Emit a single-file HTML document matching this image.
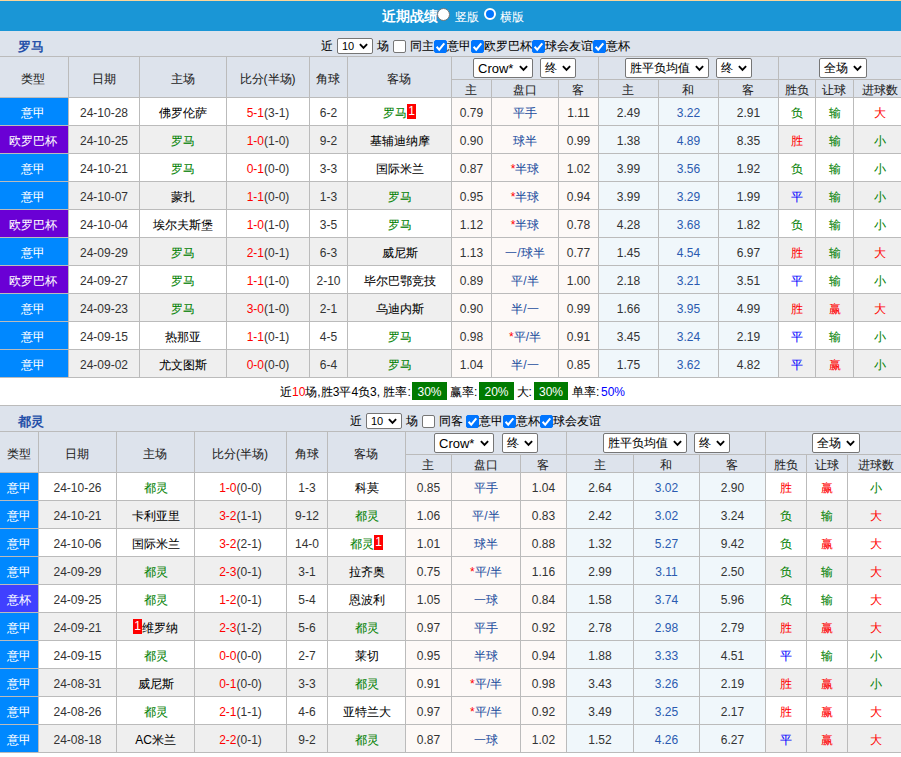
<!DOCTYPE html>
<html><head><meta charset="utf-8"><style>
html,body{margin:0;padding:0;}
body{width:901px;height:757px;overflow:hidden;position:relative;background:#fff;font-family:"Liberation Sans",sans-serif;font-size:12px;}
div,p{position:absolute;margin:0;padding:0;box-sizing:border-box;}
p{text-align:center;white-space:nowrap;}
.sel{height:20px;border:1px solid #767676;border-radius:2px;background:#fff;font-size:13px;line-height:19px;}
.sel.small{height:16px;line-height:14px;font-size:11px;border-radius:2px;}
.sel.small .chev{right:4px;}
.sel .st{position:absolute;left:4px;top:0;color:#000;}
.sel .chev{position:absolute;right:4.5px;top:6px;}
.sel.small .chev{top:4px;}
.cb{width:13px;height:13px;border:1px solid #767676;border-radius:2px;background:#fff;}
.cb.on{background:#0075ff;border-color:#0075ff;}
.cb svg{position:absolute;left:-1px;top:-1px;}
.radio{width:13px;height:13px;border-radius:50%;background:#fff;border:1px solid #767676;}
.radio.on{background:#0075ff;border:2px solid #fff;}
i{font-style:normal;-webkit-text-stroke:0.06px currentColor;}
p[style*="bold"] i{-webkit-text-stroke:0;}
.rc{display:inline-block;background:#ff0000;color:#fff;font-weight:normal;width:9px;height:15px;line-height:15px;text-align:center;vertical-align:2px;}
.gb{display:inline-block;background:#007a00;color:#fff;font-weight:normal;height:18px;line-height:18px;text-align:center;font-size:13px;vertical-align:middle;}
</style></head><body>
<div style="left:0px;top:0px;width:901px;height:1px;background:#fdd598;"></div>
<div style="left:0px;top:1px;width:901px;height:30px;background:#1a96d6;"></div>
<p style="left:369.5px;top:1px;width:80px;height:30px;line-height:30px;color:#fff;font-size:14px;font-weight:bold;"><i>近期战绩</i></p>
<div class="radio" style="left:437px;top:8px;"></div>
<p style="left:437.0px;top:2px;width:60px;height:30px;line-height:30px;color:#fff;font-size:12px;"><i>竖版</i></p>
<div class="radio on" style="left:484px;top:8px;width:12px;height:12px;"></div>
<p style="left:482.0px;top:2px;width:60px;height:30px;line-height:30px;color:#fff;font-size:12px;"><i>横版</i></p>
<div style="left:0px;top:31px;width:901px;height:25px;background:#dde3ec;"></div>
<p style="left:0.5px;top:34px;width:60px;height:25px;line-height:25px;color:#2550a8;font-size:13px;font-weight:bold;"><i>罗马</i></p>
<p style="left:321px;top:34px;height:25px;line-height:25px;font-size:12px;color:#000;white-space:nowrap;"><i>近</i></p>
<div class="sel small" style="left:337px;top:38px;width:36px;"><span class="st">10</span><svg class="chev" width="9" height="7" viewBox="0 0 9 7"><path d="M0.9 1.2 L4.5 4.9 L8.1 1.2" fill="none" stroke="#000" stroke-width="1.9"/></svg></div>
<p style="left:377px;top:34px;height:25px;line-height:25px;font-size:12px;color:#000;white-space:nowrap;"><i>场</i></p>
<div class="cb" style="left:393px;top:40px;"></div>
<p style="left:410px;top:34px;height:25px;line-height:25px;font-size:12px;color:#000;white-space:nowrap;"><i>同主</i></p>
<div class="cb on" style="left:434px;top:40px;"><svg width="13" height="13" viewBox="0 0 13 13"><path d="M2.6 6.8 L5.2 9.6 L10.3 3.3" fill="none" stroke="#fff" stroke-width="2"/></svg></div>
<p style="left:447px;top:34px;height:25px;line-height:25px;font-size:12px;color:#000;white-space:nowrap;"><i>意甲</i></p>
<div class="cb on" style="left:471px;top:40px;"><svg width="13" height="13" viewBox="0 0 13 13"><path d="M2.6 6.8 L5.2 9.6 L10.3 3.3" fill="none" stroke="#fff" stroke-width="2"/></svg></div>
<p style="left:484px;top:34px;height:25px;line-height:25px;font-size:12px;color:#000;white-space:nowrap;"><i>欧罗巴杯</i></p>
<div class="cb on" style="left:532px;top:40px;"><svg width="13" height="13" viewBox="0 0 13 13"><path d="M2.6 6.8 L5.2 9.6 L10.3 3.3" fill="none" stroke="#fff" stroke-width="2"/></svg></div>
<p style="left:545px;top:34px;height:25px;line-height:25px;font-size:12px;color:#000;white-space:nowrap;"><i>球会友谊</i></p>
<div class="cb on" style="left:593px;top:40px;"><svg width="13" height="13" viewBox="0 0 13 13"><path d="M2.6 6.8 L5.2 9.6 L10.3 3.3" fill="none" stroke="#fff" stroke-width="2"/></svg></div>
<p style="left:606px;top:34px;height:25px;line-height:25px;font-size:12px;color:#000;white-space:nowrap;"><i>意杯</i></p>
<div style="left:0px;top:56px;width:901px;height:1px;background:#bbbbbb;"></div>
<div style="left:0px;top:57px;width:901px;height:40px;background:#dde3ec;"></div>
<div style="left:451px;top:79px;width:450px;height:1px;background:#bbbbbb;"></div>
<div style="left:0px;top:97px;width:901px;height:1px;background:#bbbbbb;"></div>
<div style="left:68px;top:56px;width:1px;height:41px;background:#bbbbbb;"></div>
<div style="left:139px;top:56px;width:1px;height:41px;background:#bbbbbb;"></div>
<div style="left:226px;top:56px;width:1px;height:41px;background:#bbbbbb;"></div>
<div style="left:309px;top:56px;width:1px;height:41px;background:#bbbbbb;"></div>
<div style="left:347px;top:56px;width:1px;height:41px;background:#bbbbbb;"></div>
<div style="left:451px;top:56px;width:1px;height:41px;background:#bbbbbb;"></div>
<div style="left:598px;top:56px;width:1px;height:41px;background:#bbbbbb;"></div>
<div style="left:778px;top:56px;width:1px;height:41px;background:#bbbbbb;"></div>
<div style="left:491px;top:79px;width:1px;height:18px;background:#bbbbbb;"></div>
<div style="left:558px;top:79px;width:1px;height:18px;background:#bbbbbb;"></div>
<div style="left:658px;top:79px;width:1px;height:18px;background:#bbbbbb;"></div>
<div style="left:718px;top:79px;width:1px;height:18px;background:#bbbbbb;"></div>
<div style="left:815px;top:79px;width:1px;height:18px;background:#bbbbbb;"></div>
<div style="left:853px;top:79px;width:1px;height:18px;background:#bbbbbb;"></div>
<p style="left:-67.5px;top:59px;width:200px;height:40px;line-height:40px;color:#222;font-size:12px;"><i>类型</i></p>
<p style="left:3.5px;top:59px;width:200px;height:40px;line-height:40px;color:#222;font-size:12px;"><i>日期</i></p>
<p style="left:82.5px;top:59px;width:200px;height:40px;line-height:40px;color:#222;font-size:12px;"><i>主场</i></p>
<p style="left:167.5px;top:59px;width:200px;height:40px;line-height:40px;color:#222;font-size:12px;"><i>比分</i>(<i>半场</i>)</p>
<p style="left:228.0px;top:59px;width:200px;height:40px;line-height:40px;color:#222;font-size:12px;"><i>角球</i></p>
<p style="left:299.0px;top:59px;width:200px;height:40px;line-height:40px;color:#222;font-size:12px;"><i>客场</i></p>
<p style="left:371.0px;top:82px;width:200px;height:17px;line-height:17px;color:#222;font-size:12px;"><i>主</i></p>
<p style="left:424.5px;top:82px;width:200px;height:17px;line-height:17px;color:#222;font-size:12px;"><i>盘口</i></p>
<p style="left:478.0px;top:82px;width:200px;height:17px;line-height:17px;color:#222;font-size:12px;"><i>客</i></p>
<p style="left:528.0px;top:82px;width:200px;height:17px;line-height:17px;color:#222;font-size:12px;"><i>主</i></p>
<p style="left:588.0px;top:82px;width:200px;height:17px;line-height:17px;color:#222;font-size:12px;"><i>和</i></p>
<p style="left:648.0px;top:82px;width:200px;height:17px;line-height:17px;color:#222;font-size:12px;"><i>客</i></p>
<p style="left:696.5px;top:82px;width:200px;height:17px;line-height:17px;color:#222;font-size:12px;"><i>胜负</i></p>
<p style="left:734.0px;top:82px;width:200px;height:17px;line-height:17px;color:#222;font-size:12px;"><i>让球</i></p>
<p style="left:779.5px;top:82px;width:200px;height:17px;line-height:17px;color:#222;font-size:12px;"><i>进球数</i></p>
<div class="sel" style="left:473px;top:58px;width:60px;font-size:13px;"><span class="st">Crow*</span><svg class="chev" width="9" height="7" viewBox="0 0 9 7"><path d="M0.9 1.2 L4.5 4.9 L8.1 1.2" fill="none" stroke="#000" stroke-width="1.9"/></svg></div>
<div class="sel" style="left:540px;top:58px;width:36px;font-size:12px;"><span class="st"><i>终</i></span><svg class="chev" width="9" height="7" viewBox="0 0 9 7"><path d="M0.9 1.2 L4.5 4.9 L8.1 1.2" fill="none" stroke="#000" stroke-width="1.9"/></svg></div>
<div class="sel" style="left:625px;top:58px;width:84px;font-size:12px;"><span class="st"><i>胜平负均值</i></span><svg class="chev" width="9" height="7" viewBox="0 0 9 7"><path d="M0.9 1.2 L4.5 4.9 L8.1 1.2" fill="none" stroke="#000" stroke-width="1.9"/></svg></div>
<div class="sel" style="left:716px;top:58px;width:36px;font-size:12px;"><span class="st"><i>终</i></span><svg class="chev" width="9" height="7" viewBox="0 0 9 7"><path d="M0.9 1.2 L4.5 4.9 L8.1 1.2" fill="none" stroke="#000" stroke-width="1.9"/></svg></div>
<div class="sel" style="left:819px;top:58px;width:48px;font-size:12px;"><span class="st"><i>全场</i></span><svg class="chev" width="9" height="7" viewBox="0 0 9 7"><path d="M0.9 1.2 L4.5 4.9 L8.1 1.2" fill="none" stroke="#000" stroke-width="1.9"/></svg></div>
<div style="left:0px;top:98px;width:68px;height:27px;background:#0088ff;"></div>
<div style="left:69px;top:98px;width:70px;height:27px;background:#ffffff;"></div>
<div style="left:140px;top:98px;width:86px;height:27px;background:#ffffff;"></div>
<div style="left:227px;top:98px;width:82px;height:27px;background:#ffffff;"></div>
<div style="left:310px;top:98px;width:37px;height:27px;background:#ffffff;"></div>
<div style="left:348px;top:98px;width:103px;height:27px;background:#ffffff;"></div>
<div style="left:452px;top:98px;width:39px;height:27px;background:#fdf9f7;"></div>
<div style="left:492px;top:98px;width:66px;height:27px;background:#fdf9f7;"></div>
<div style="left:559px;top:98px;width:39px;height:27px;background:#fdf9f7;"></div>
<div style="left:599px;top:98px;width:59px;height:27px;background:#f0f7fb;"></div>
<div style="left:659px;top:98px;width:59px;height:27px;background:#f0f7fb;"></div>
<div style="left:719px;top:98px;width:59px;height:27px;background:#f0f7fb;"></div>
<div style="left:779px;top:98px;width:36px;height:27px;background:#ffffff;"></div>
<div style="left:816px;top:98px;width:37px;height:27px;background:#ffffff;"></div>
<div style="left:854px;top:98px;width:52px;height:27px;background:#ffffff;"></div>
<div style="left:68px;top:98px;width:1px;height:27px;background:#bbbbbb;"></div>
<div style="left:139px;top:98px;width:1px;height:27px;background:#bbbbbb;"></div>
<div style="left:226px;top:98px;width:1px;height:27px;background:#bbbbbb;"></div>
<div style="left:309px;top:98px;width:1px;height:27px;background:#bbbbbb;"></div>
<div style="left:347px;top:98px;width:1px;height:27px;background:#bbbbbb;"></div>
<div style="left:451px;top:98px;width:1px;height:27px;background:#bbbbbb;"></div>
<div style="left:491px;top:98px;width:1px;height:27px;background:#bbbbbb;"></div>
<div style="left:558px;top:98px;width:1px;height:27px;background:#bbbbbb;"></div>
<div style="left:598px;top:98px;width:1px;height:27px;background:#bbbbbb;"></div>
<div style="left:658px;top:98px;width:1px;height:27px;background:#bbbbbb;"></div>
<div style="left:718px;top:98px;width:1px;height:27px;background:#bbbbbb;"></div>
<div style="left:778px;top:98px;width:1px;height:27px;background:#bbbbbb;"></div>
<div style="left:815px;top:98px;width:1px;height:27px;background:#bbbbbb;"></div>
<div style="left:853px;top:98px;width:1px;height:27px;background:#bbbbbb;"></div>
<div style="left:0px;top:125px;width:901px;height:1px;background:#bbbbbb;"></div>
<p style="left:-67.5px;top:100px;width:200px;height:27px;line-height:27px;color:#fff;font-size:12px;"><i>意甲</i></p>
<p style="left:4.0px;top:100px;width:200px;height:27px;line-height:27px;color:#333333;font-size:12px;">24-10-28</p>
<p style="left:83.0px;top:100px;width:200px;height:27px;line-height:27px;color:#000;font-size:12px;"><i>佛罗伦萨</i></p>
<p style="left:168.0px;top:100px;width:200px;height:27px;line-height:27px;color:#333333;font-size:12px;"><span style="color:#ff0000">5-1</span>(3-1)</p>
<p style="left:228.5px;top:100px;width:200px;height:27px;line-height:27px;color:#333333;font-size:12px;">6-2</p>
<p style="left:299.5px;top:100px;width:200px;height:27px;line-height:27px;color:#008000;font-size:12px;"><i>罗马</i><b class="rc">1</b></p>
<p style="left:371.5px;top:100px;width:200px;height:27px;line-height:27px;color:#333333;font-size:12px;">0.79</p>
<p style="left:425.0px;top:100px;width:200px;height:27px;line-height:27px;color:#1f4f9f;font-size:12px;"><i>平手</i></p>
<p style="left:478.5px;top:100px;width:200px;height:27px;line-height:27px;color:#333333;font-size:12px;">1.11</p>
<p style="left:528.5px;top:100px;width:200px;height:27px;line-height:27px;color:#333333;font-size:12px;">2.49</p>
<p style="left:588.5px;top:100px;width:200px;height:27px;line-height:27px;color:#2a5ab0;font-size:12px;">3.22</p>
<p style="left:648.5px;top:100px;width:200px;height:27px;line-height:27px;color:#333333;font-size:12px;">2.91</p>
<p style="left:697.0px;top:100px;width:200px;height:27px;line-height:27px;color:#008000;font-size:12px;"><i>负</i></p>
<p style="left:734.5px;top:100px;width:200px;height:27px;line-height:27px;color:#008000;font-size:12px;"><i>输</i></p>
<p style="left:779.5px;top:100px;width:200px;height:27px;line-height:27px;color:#ff0000;font-size:12px;"><i>大</i></p>
<div style="left:0px;top:126px;width:68px;height:27px;background:#6a00d5;"></div>
<div style="left:69px;top:126px;width:70px;height:27px;background:#efefef;"></div>
<div style="left:140px;top:126px;width:86px;height:27px;background:#efefef;"></div>
<div style="left:227px;top:126px;width:82px;height:27px;background:#efefef;"></div>
<div style="left:310px;top:126px;width:37px;height:27px;background:#efefef;"></div>
<div style="left:348px;top:126px;width:103px;height:27px;background:#efefef;"></div>
<div style="left:452px;top:126px;width:39px;height:27px;background:#fdf9f7;"></div>
<div style="left:492px;top:126px;width:66px;height:27px;background:#fdf9f7;"></div>
<div style="left:559px;top:126px;width:39px;height:27px;background:#fdf9f7;"></div>
<div style="left:599px;top:126px;width:59px;height:27px;background:#f0f7fb;"></div>
<div style="left:659px;top:126px;width:59px;height:27px;background:#f0f7fb;"></div>
<div style="left:719px;top:126px;width:59px;height:27px;background:#f0f7fb;"></div>
<div style="left:779px;top:126px;width:36px;height:27px;background:#efefef;"></div>
<div style="left:816px;top:126px;width:37px;height:27px;background:#efefef;"></div>
<div style="left:854px;top:126px;width:52px;height:27px;background:#efefef;"></div>
<div style="left:68px;top:126px;width:1px;height:27px;background:#bbbbbb;"></div>
<div style="left:139px;top:126px;width:1px;height:27px;background:#bbbbbb;"></div>
<div style="left:226px;top:126px;width:1px;height:27px;background:#bbbbbb;"></div>
<div style="left:309px;top:126px;width:1px;height:27px;background:#bbbbbb;"></div>
<div style="left:347px;top:126px;width:1px;height:27px;background:#bbbbbb;"></div>
<div style="left:451px;top:126px;width:1px;height:27px;background:#bbbbbb;"></div>
<div style="left:491px;top:126px;width:1px;height:27px;background:#bbbbbb;"></div>
<div style="left:558px;top:126px;width:1px;height:27px;background:#bbbbbb;"></div>
<div style="left:598px;top:126px;width:1px;height:27px;background:#bbbbbb;"></div>
<div style="left:658px;top:126px;width:1px;height:27px;background:#bbbbbb;"></div>
<div style="left:718px;top:126px;width:1px;height:27px;background:#bbbbbb;"></div>
<div style="left:778px;top:126px;width:1px;height:27px;background:#bbbbbb;"></div>
<div style="left:815px;top:126px;width:1px;height:27px;background:#bbbbbb;"></div>
<div style="left:853px;top:126px;width:1px;height:27px;background:#bbbbbb;"></div>
<div style="left:0px;top:153px;width:901px;height:1px;background:#bbbbbb;"></div>
<p style="left:-67.5px;top:128px;width:200px;height:27px;line-height:27px;color:#fff;font-size:12px;"><i>欧罗巴杯</i></p>
<p style="left:4.0px;top:128px;width:200px;height:27px;line-height:27px;color:#333333;font-size:12px;">24-10-25</p>
<p style="left:83.0px;top:128px;width:200px;height:27px;line-height:27px;color:#008000;font-size:12px;"><i>罗马</i></p>
<p style="left:168.0px;top:128px;width:200px;height:27px;line-height:27px;color:#333333;font-size:12px;"><span style="color:#ff0000">1-0</span>(1-0)</p>
<p style="left:228.5px;top:128px;width:200px;height:27px;line-height:27px;color:#333333;font-size:12px;">9-2</p>
<p style="left:299.5px;top:128px;width:200px;height:27px;line-height:27px;color:#000;font-size:12px;"><i>基辅迪纳摩</i></p>
<p style="left:371.5px;top:128px;width:200px;height:27px;line-height:27px;color:#333333;font-size:12px;">0.90</p>
<p style="left:425.0px;top:128px;width:200px;height:27px;line-height:27px;color:#1f4f9f;font-size:12px;"><i>球半</i></p>
<p style="left:478.5px;top:128px;width:200px;height:27px;line-height:27px;color:#333333;font-size:12px;">0.99</p>
<p style="left:528.5px;top:128px;width:200px;height:27px;line-height:27px;color:#333333;font-size:12px;">1.38</p>
<p style="left:588.5px;top:128px;width:200px;height:27px;line-height:27px;color:#2a5ab0;font-size:12px;">4.89</p>
<p style="left:648.5px;top:128px;width:200px;height:27px;line-height:27px;color:#333333;font-size:12px;">8.35</p>
<p style="left:697.0px;top:128px;width:200px;height:27px;line-height:27px;color:#ff0000;font-size:12px;"><i>胜</i></p>
<p style="left:734.5px;top:128px;width:200px;height:27px;line-height:27px;color:#008000;font-size:12px;"><i>输</i></p>
<p style="left:779.5px;top:128px;width:200px;height:27px;line-height:27px;color:#008000;font-size:12px;"><i>小</i></p>
<div style="left:0px;top:154px;width:68px;height:27px;background:#0088ff;"></div>
<div style="left:69px;top:154px;width:70px;height:27px;background:#ffffff;"></div>
<div style="left:140px;top:154px;width:86px;height:27px;background:#ffffff;"></div>
<div style="left:227px;top:154px;width:82px;height:27px;background:#ffffff;"></div>
<div style="left:310px;top:154px;width:37px;height:27px;background:#ffffff;"></div>
<div style="left:348px;top:154px;width:103px;height:27px;background:#ffffff;"></div>
<div style="left:452px;top:154px;width:39px;height:27px;background:#fdf9f7;"></div>
<div style="left:492px;top:154px;width:66px;height:27px;background:#fdf9f7;"></div>
<div style="left:559px;top:154px;width:39px;height:27px;background:#fdf9f7;"></div>
<div style="left:599px;top:154px;width:59px;height:27px;background:#f0f7fb;"></div>
<div style="left:659px;top:154px;width:59px;height:27px;background:#f0f7fb;"></div>
<div style="left:719px;top:154px;width:59px;height:27px;background:#f0f7fb;"></div>
<div style="left:779px;top:154px;width:36px;height:27px;background:#ffffff;"></div>
<div style="left:816px;top:154px;width:37px;height:27px;background:#ffffff;"></div>
<div style="left:854px;top:154px;width:52px;height:27px;background:#ffffff;"></div>
<div style="left:68px;top:154px;width:1px;height:27px;background:#bbbbbb;"></div>
<div style="left:139px;top:154px;width:1px;height:27px;background:#bbbbbb;"></div>
<div style="left:226px;top:154px;width:1px;height:27px;background:#bbbbbb;"></div>
<div style="left:309px;top:154px;width:1px;height:27px;background:#bbbbbb;"></div>
<div style="left:347px;top:154px;width:1px;height:27px;background:#bbbbbb;"></div>
<div style="left:451px;top:154px;width:1px;height:27px;background:#bbbbbb;"></div>
<div style="left:491px;top:154px;width:1px;height:27px;background:#bbbbbb;"></div>
<div style="left:558px;top:154px;width:1px;height:27px;background:#bbbbbb;"></div>
<div style="left:598px;top:154px;width:1px;height:27px;background:#bbbbbb;"></div>
<div style="left:658px;top:154px;width:1px;height:27px;background:#bbbbbb;"></div>
<div style="left:718px;top:154px;width:1px;height:27px;background:#bbbbbb;"></div>
<div style="left:778px;top:154px;width:1px;height:27px;background:#bbbbbb;"></div>
<div style="left:815px;top:154px;width:1px;height:27px;background:#bbbbbb;"></div>
<div style="left:853px;top:154px;width:1px;height:27px;background:#bbbbbb;"></div>
<div style="left:0px;top:181px;width:901px;height:1px;background:#bbbbbb;"></div>
<p style="left:-67.5px;top:156px;width:200px;height:27px;line-height:27px;color:#fff;font-size:12px;"><i>意甲</i></p>
<p style="left:4.0px;top:156px;width:200px;height:27px;line-height:27px;color:#333333;font-size:12px;">24-10-21</p>
<p style="left:83.0px;top:156px;width:200px;height:27px;line-height:27px;color:#008000;font-size:12px;"><i>罗马</i></p>
<p style="left:168.0px;top:156px;width:200px;height:27px;line-height:27px;color:#333333;font-size:12px;"><span style="color:#ff0000">0-1</span>(0-0)</p>
<p style="left:228.5px;top:156px;width:200px;height:27px;line-height:27px;color:#333333;font-size:12px;">3-3</p>
<p style="left:299.5px;top:156px;width:200px;height:27px;line-height:27px;color:#000;font-size:12px;"><i>国际米兰</i></p>
<p style="left:371.5px;top:156px;width:200px;height:27px;line-height:27px;color:#333333;font-size:12px;">0.87</p>
<p style="left:425.0px;top:156px;width:200px;height:27px;line-height:27px;color:#1f4f9f;font-size:12px;"><span style="color:#ff0000">*</span><i>半球</i></p>
<p style="left:478.5px;top:156px;width:200px;height:27px;line-height:27px;color:#333333;font-size:12px;">1.02</p>
<p style="left:528.5px;top:156px;width:200px;height:27px;line-height:27px;color:#333333;font-size:12px;">3.99</p>
<p style="left:588.5px;top:156px;width:200px;height:27px;line-height:27px;color:#2a5ab0;font-size:12px;">3.56</p>
<p style="left:648.5px;top:156px;width:200px;height:27px;line-height:27px;color:#333333;font-size:12px;">1.92</p>
<p style="left:697.0px;top:156px;width:200px;height:27px;line-height:27px;color:#008000;font-size:12px;"><i>负</i></p>
<p style="left:734.5px;top:156px;width:200px;height:27px;line-height:27px;color:#008000;font-size:12px;"><i>输</i></p>
<p style="left:779.5px;top:156px;width:200px;height:27px;line-height:27px;color:#008000;font-size:12px;"><i>小</i></p>
<div style="left:0px;top:182px;width:68px;height:27px;background:#0088ff;"></div>
<div style="left:69px;top:182px;width:70px;height:27px;background:#efefef;"></div>
<div style="left:140px;top:182px;width:86px;height:27px;background:#efefef;"></div>
<div style="left:227px;top:182px;width:82px;height:27px;background:#efefef;"></div>
<div style="left:310px;top:182px;width:37px;height:27px;background:#efefef;"></div>
<div style="left:348px;top:182px;width:103px;height:27px;background:#efefef;"></div>
<div style="left:452px;top:182px;width:39px;height:27px;background:#fdf9f7;"></div>
<div style="left:492px;top:182px;width:66px;height:27px;background:#fdf9f7;"></div>
<div style="left:559px;top:182px;width:39px;height:27px;background:#fdf9f7;"></div>
<div style="left:599px;top:182px;width:59px;height:27px;background:#f0f7fb;"></div>
<div style="left:659px;top:182px;width:59px;height:27px;background:#f0f7fb;"></div>
<div style="left:719px;top:182px;width:59px;height:27px;background:#f0f7fb;"></div>
<div style="left:779px;top:182px;width:36px;height:27px;background:#efefef;"></div>
<div style="left:816px;top:182px;width:37px;height:27px;background:#efefef;"></div>
<div style="left:854px;top:182px;width:52px;height:27px;background:#efefef;"></div>
<div style="left:68px;top:182px;width:1px;height:27px;background:#bbbbbb;"></div>
<div style="left:139px;top:182px;width:1px;height:27px;background:#bbbbbb;"></div>
<div style="left:226px;top:182px;width:1px;height:27px;background:#bbbbbb;"></div>
<div style="left:309px;top:182px;width:1px;height:27px;background:#bbbbbb;"></div>
<div style="left:347px;top:182px;width:1px;height:27px;background:#bbbbbb;"></div>
<div style="left:451px;top:182px;width:1px;height:27px;background:#bbbbbb;"></div>
<div style="left:491px;top:182px;width:1px;height:27px;background:#bbbbbb;"></div>
<div style="left:558px;top:182px;width:1px;height:27px;background:#bbbbbb;"></div>
<div style="left:598px;top:182px;width:1px;height:27px;background:#bbbbbb;"></div>
<div style="left:658px;top:182px;width:1px;height:27px;background:#bbbbbb;"></div>
<div style="left:718px;top:182px;width:1px;height:27px;background:#bbbbbb;"></div>
<div style="left:778px;top:182px;width:1px;height:27px;background:#bbbbbb;"></div>
<div style="left:815px;top:182px;width:1px;height:27px;background:#bbbbbb;"></div>
<div style="left:853px;top:182px;width:1px;height:27px;background:#bbbbbb;"></div>
<div style="left:0px;top:209px;width:901px;height:1px;background:#bbbbbb;"></div>
<p style="left:-67.5px;top:184px;width:200px;height:27px;line-height:27px;color:#fff;font-size:12px;"><i>意甲</i></p>
<p style="left:4.0px;top:184px;width:200px;height:27px;line-height:27px;color:#333333;font-size:12px;">24-10-07</p>
<p style="left:83.0px;top:184px;width:200px;height:27px;line-height:27px;color:#000;font-size:12px;"><i>蒙扎</i></p>
<p style="left:168.0px;top:184px;width:200px;height:27px;line-height:27px;color:#333333;font-size:12px;"><span style="color:#ff0000">1-1</span>(0-0)</p>
<p style="left:228.5px;top:184px;width:200px;height:27px;line-height:27px;color:#333333;font-size:12px;">1-3</p>
<p style="left:299.5px;top:184px;width:200px;height:27px;line-height:27px;color:#008000;font-size:12px;"><i>罗马</i></p>
<p style="left:371.5px;top:184px;width:200px;height:27px;line-height:27px;color:#333333;font-size:12px;">0.95</p>
<p style="left:425.0px;top:184px;width:200px;height:27px;line-height:27px;color:#1f4f9f;font-size:12px;"><span style="color:#ff0000">*</span><i>半球</i></p>
<p style="left:478.5px;top:184px;width:200px;height:27px;line-height:27px;color:#333333;font-size:12px;">0.94</p>
<p style="left:528.5px;top:184px;width:200px;height:27px;line-height:27px;color:#333333;font-size:12px;">3.99</p>
<p style="left:588.5px;top:184px;width:200px;height:27px;line-height:27px;color:#2a5ab0;font-size:12px;">3.29</p>
<p style="left:648.5px;top:184px;width:200px;height:27px;line-height:27px;color:#333333;font-size:12px;">1.99</p>
<p style="left:697.0px;top:184px;width:200px;height:27px;line-height:27px;color:#0000ff;font-size:12px;"><i>平</i></p>
<p style="left:734.5px;top:184px;width:200px;height:27px;line-height:27px;color:#008000;font-size:12px;"><i>输</i></p>
<p style="left:779.5px;top:184px;width:200px;height:27px;line-height:27px;color:#008000;font-size:12px;"><i>小</i></p>
<div style="left:0px;top:210px;width:68px;height:27px;background:#6a00d5;"></div>
<div style="left:69px;top:210px;width:70px;height:27px;background:#ffffff;"></div>
<div style="left:140px;top:210px;width:86px;height:27px;background:#ffffff;"></div>
<div style="left:227px;top:210px;width:82px;height:27px;background:#ffffff;"></div>
<div style="left:310px;top:210px;width:37px;height:27px;background:#ffffff;"></div>
<div style="left:348px;top:210px;width:103px;height:27px;background:#ffffff;"></div>
<div style="left:452px;top:210px;width:39px;height:27px;background:#fdf9f7;"></div>
<div style="left:492px;top:210px;width:66px;height:27px;background:#fdf9f7;"></div>
<div style="left:559px;top:210px;width:39px;height:27px;background:#fdf9f7;"></div>
<div style="left:599px;top:210px;width:59px;height:27px;background:#f0f7fb;"></div>
<div style="left:659px;top:210px;width:59px;height:27px;background:#f0f7fb;"></div>
<div style="left:719px;top:210px;width:59px;height:27px;background:#f0f7fb;"></div>
<div style="left:779px;top:210px;width:36px;height:27px;background:#ffffff;"></div>
<div style="left:816px;top:210px;width:37px;height:27px;background:#ffffff;"></div>
<div style="left:854px;top:210px;width:52px;height:27px;background:#ffffff;"></div>
<div style="left:68px;top:210px;width:1px;height:27px;background:#bbbbbb;"></div>
<div style="left:139px;top:210px;width:1px;height:27px;background:#bbbbbb;"></div>
<div style="left:226px;top:210px;width:1px;height:27px;background:#bbbbbb;"></div>
<div style="left:309px;top:210px;width:1px;height:27px;background:#bbbbbb;"></div>
<div style="left:347px;top:210px;width:1px;height:27px;background:#bbbbbb;"></div>
<div style="left:451px;top:210px;width:1px;height:27px;background:#bbbbbb;"></div>
<div style="left:491px;top:210px;width:1px;height:27px;background:#bbbbbb;"></div>
<div style="left:558px;top:210px;width:1px;height:27px;background:#bbbbbb;"></div>
<div style="left:598px;top:210px;width:1px;height:27px;background:#bbbbbb;"></div>
<div style="left:658px;top:210px;width:1px;height:27px;background:#bbbbbb;"></div>
<div style="left:718px;top:210px;width:1px;height:27px;background:#bbbbbb;"></div>
<div style="left:778px;top:210px;width:1px;height:27px;background:#bbbbbb;"></div>
<div style="left:815px;top:210px;width:1px;height:27px;background:#bbbbbb;"></div>
<div style="left:853px;top:210px;width:1px;height:27px;background:#bbbbbb;"></div>
<div style="left:0px;top:237px;width:901px;height:1px;background:#bbbbbb;"></div>
<p style="left:-67.5px;top:212px;width:200px;height:27px;line-height:27px;color:#fff;font-size:12px;"><i>欧罗巴杯</i></p>
<p style="left:4.0px;top:212px;width:200px;height:27px;line-height:27px;color:#333333;font-size:12px;">24-10-04</p>
<p style="left:83.0px;top:212px;width:200px;height:27px;line-height:27px;color:#000;font-size:12px;"><i>埃尔夫斯堡</i></p>
<p style="left:168.0px;top:212px;width:200px;height:27px;line-height:27px;color:#333333;font-size:12px;"><span style="color:#ff0000">1-0</span>(1-0)</p>
<p style="left:228.5px;top:212px;width:200px;height:27px;line-height:27px;color:#333333;font-size:12px;">3-5</p>
<p style="left:299.5px;top:212px;width:200px;height:27px;line-height:27px;color:#008000;font-size:12px;"><i>罗马</i></p>
<p style="left:371.5px;top:212px;width:200px;height:27px;line-height:27px;color:#333333;font-size:12px;">1.12</p>
<p style="left:425.0px;top:212px;width:200px;height:27px;line-height:27px;color:#1f4f9f;font-size:12px;"><span style="color:#ff0000">*</span><i>半球</i></p>
<p style="left:478.5px;top:212px;width:200px;height:27px;line-height:27px;color:#333333;font-size:12px;">0.78</p>
<p style="left:528.5px;top:212px;width:200px;height:27px;line-height:27px;color:#333333;font-size:12px;">4.28</p>
<p style="left:588.5px;top:212px;width:200px;height:27px;line-height:27px;color:#2a5ab0;font-size:12px;">3.68</p>
<p style="left:648.5px;top:212px;width:200px;height:27px;line-height:27px;color:#333333;font-size:12px;">1.82</p>
<p style="left:697.0px;top:212px;width:200px;height:27px;line-height:27px;color:#008000;font-size:12px;"><i>负</i></p>
<p style="left:734.5px;top:212px;width:200px;height:27px;line-height:27px;color:#008000;font-size:12px;"><i>输</i></p>
<p style="left:779.5px;top:212px;width:200px;height:27px;line-height:27px;color:#008000;font-size:12px;"><i>小</i></p>
<div style="left:0px;top:238px;width:68px;height:27px;background:#0088ff;"></div>
<div style="left:69px;top:238px;width:70px;height:27px;background:#efefef;"></div>
<div style="left:140px;top:238px;width:86px;height:27px;background:#efefef;"></div>
<div style="left:227px;top:238px;width:82px;height:27px;background:#efefef;"></div>
<div style="left:310px;top:238px;width:37px;height:27px;background:#efefef;"></div>
<div style="left:348px;top:238px;width:103px;height:27px;background:#efefef;"></div>
<div style="left:452px;top:238px;width:39px;height:27px;background:#fdf9f7;"></div>
<div style="left:492px;top:238px;width:66px;height:27px;background:#fdf9f7;"></div>
<div style="left:559px;top:238px;width:39px;height:27px;background:#fdf9f7;"></div>
<div style="left:599px;top:238px;width:59px;height:27px;background:#f0f7fb;"></div>
<div style="left:659px;top:238px;width:59px;height:27px;background:#f0f7fb;"></div>
<div style="left:719px;top:238px;width:59px;height:27px;background:#f0f7fb;"></div>
<div style="left:779px;top:238px;width:36px;height:27px;background:#efefef;"></div>
<div style="left:816px;top:238px;width:37px;height:27px;background:#efefef;"></div>
<div style="left:854px;top:238px;width:52px;height:27px;background:#efefef;"></div>
<div style="left:68px;top:238px;width:1px;height:27px;background:#bbbbbb;"></div>
<div style="left:139px;top:238px;width:1px;height:27px;background:#bbbbbb;"></div>
<div style="left:226px;top:238px;width:1px;height:27px;background:#bbbbbb;"></div>
<div style="left:309px;top:238px;width:1px;height:27px;background:#bbbbbb;"></div>
<div style="left:347px;top:238px;width:1px;height:27px;background:#bbbbbb;"></div>
<div style="left:451px;top:238px;width:1px;height:27px;background:#bbbbbb;"></div>
<div style="left:491px;top:238px;width:1px;height:27px;background:#bbbbbb;"></div>
<div style="left:558px;top:238px;width:1px;height:27px;background:#bbbbbb;"></div>
<div style="left:598px;top:238px;width:1px;height:27px;background:#bbbbbb;"></div>
<div style="left:658px;top:238px;width:1px;height:27px;background:#bbbbbb;"></div>
<div style="left:718px;top:238px;width:1px;height:27px;background:#bbbbbb;"></div>
<div style="left:778px;top:238px;width:1px;height:27px;background:#bbbbbb;"></div>
<div style="left:815px;top:238px;width:1px;height:27px;background:#bbbbbb;"></div>
<div style="left:853px;top:238px;width:1px;height:27px;background:#bbbbbb;"></div>
<div style="left:0px;top:265px;width:901px;height:1px;background:#bbbbbb;"></div>
<p style="left:-67.5px;top:240px;width:200px;height:27px;line-height:27px;color:#fff;font-size:12px;"><i>意甲</i></p>
<p style="left:4.0px;top:240px;width:200px;height:27px;line-height:27px;color:#333333;font-size:12px;">24-09-29</p>
<p style="left:83.0px;top:240px;width:200px;height:27px;line-height:27px;color:#008000;font-size:12px;"><i>罗马</i></p>
<p style="left:168.0px;top:240px;width:200px;height:27px;line-height:27px;color:#333333;font-size:12px;"><span style="color:#ff0000">2-1</span>(0-1)</p>
<p style="left:228.5px;top:240px;width:200px;height:27px;line-height:27px;color:#333333;font-size:12px;">6-3</p>
<p style="left:299.5px;top:240px;width:200px;height:27px;line-height:27px;color:#000;font-size:12px;"><i>威尼斯</i></p>
<p style="left:371.5px;top:240px;width:200px;height:27px;line-height:27px;color:#333333;font-size:12px;">1.13</p>
<p style="left:425.0px;top:240px;width:200px;height:27px;line-height:27px;color:#1f4f9f;font-size:12px;"><i>一</i>/<i>球半</i></p>
<p style="left:478.5px;top:240px;width:200px;height:27px;line-height:27px;color:#333333;font-size:12px;">0.77</p>
<p style="left:528.5px;top:240px;width:200px;height:27px;line-height:27px;color:#333333;font-size:12px;">1.45</p>
<p style="left:588.5px;top:240px;width:200px;height:27px;line-height:27px;color:#2a5ab0;font-size:12px;">4.54</p>
<p style="left:648.5px;top:240px;width:200px;height:27px;line-height:27px;color:#333333;font-size:12px;">6.97</p>
<p style="left:697.0px;top:240px;width:200px;height:27px;line-height:27px;color:#ff0000;font-size:12px;"><i>胜</i></p>
<p style="left:734.5px;top:240px;width:200px;height:27px;line-height:27px;color:#008000;font-size:12px;"><i>输</i></p>
<p style="left:779.5px;top:240px;width:200px;height:27px;line-height:27px;color:#ff0000;font-size:12px;"><i>大</i></p>
<div style="left:0px;top:266px;width:68px;height:27px;background:#6a00d5;"></div>
<div style="left:69px;top:266px;width:70px;height:27px;background:#ffffff;"></div>
<div style="left:140px;top:266px;width:86px;height:27px;background:#ffffff;"></div>
<div style="left:227px;top:266px;width:82px;height:27px;background:#ffffff;"></div>
<div style="left:310px;top:266px;width:37px;height:27px;background:#ffffff;"></div>
<div style="left:348px;top:266px;width:103px;height:27px;background:#ffffff;"></div>
<div style="left:452px;top:266px;width:39px;height:27px;background:#fdf9f7;"></div>
<div style="left:492px;top:266px;width:66px;height:27px;background:#fdf9f7;"></div>
<div style="left:559px;top:266px;width:39px;height:27px;background:#fdf9f7;"></div>
<div style="left:599px;top:266px;width:59px;height:27px;background:#f0f7fb;"></div>
<div style="left:659px;top:266px;width:59px;height:27px;background:#f0f7fb;"></div>
<div style="left:719px;top:266px;width:59px;height:27px;background:#f0f7fb;"></div>
<div style="left:779px;top:266px;width:36px;height:27px;background:#ffffff;"></div>
<div style="left:816px;top:266px;width:37px;height:27px;background:#ffffff;"></div>
<div style="left:854px;top:266px;width:52px;height:27px;background:#ffffff;"></div>
<div style="left:68px;top:266px;width:1px;height:27px;background:#bbbbbb;"></div>
<div style="left:139px;top:266px;width:1px;height:27px;background:#bbbbbb;"></div>
<div style="left:226px;top:266px;width:1px;height:27px;background:#bbbbbb;"></div>
<div style="left:309px;top:266px;width:1px;height:27px;background:#bbbbbb;"></div>
<div style="left:347px;top:266px;width:1px;height:27px;background:#bbbbbb;"></div>
<div style="left:451px;top:266px;width:1px;height:27px;background:#bbbbbb;"></div>
<div style="left:491px;top:266px;width:1px;height:27px;background:#bbbbbb;"></div>
<div style="left:558px;top:266px;width:1px;height:27px;background:#bbbbbb;"></div>
<div style="left:598px;top:266px;width:1px;height:27px;background:#bbbbbb;"></div>
<div style="left:658px;top:266px;width:1px;height:27px;background:#bbbbbb;"></div>
<div style="left:718px;top:266px;width:1px;height:27px;background:#bbbbbb;"></div>
<div style="left:778px;top:266px;width:1px;height:27px;background:#bbbbbb;"></div>
<div style="left:815px;top:266px;width:1px;height:27px;background:#bbbbbb;"></div>
<div style="left:853px;top:266px;width:1px;height:27px;background:#bbbbbb;"></div>
<div style="left:0px;top:293px;width:901px;height:1px;background:#bbbbbb;"></div>
<p style="left:-67.5px;top:268px;width:200px;height:27px;line-height:27px;color:#fff;font-size:12px;"><i>欧罗巴杯</i></p>
<p style="left:4.0px;top:268px;width:200px;height:27px;line-height:27px;color:#333333;font-size:12px;">24-09-27</p>
<p style="left:83.0px;top:268px;width:200px;height:27px;line-height:27px;color:#008000;font-size:12px;"><i>罗马</i></p>
<p style="left:168.0px;top:268px;width:200px;height:27px;line-height:27px;color:#333333;font-size:12px;"><span style="color:#ff0000">1-1</span>(1-0)</p>
<p style="left:228.5px;top:268px;width:200px;height:27px;line-height:27px;color:#333333;font-size:12px;">2-10</p>
<p style="left:299.5px;top:268px;width:200px;height:27px;line-height:27px;color:#000;font-size:12px;"><i>毕尔巴鄂竞技</i></p>
<p style="left:371.5px;top:268px;width:200px;height:27px;line-height:27px;color:#333333;font-size:12px;">0.89</p>
<p style="left:425.0px;top:268px;width:200px;height:27px;line-height:27px;color:#1f4f9f;font-size:12px;"><i>平</i>/<i>半</i></p>
<p style="left:478.5px;top:268px;width:200px;height:27px;line-height:27px;color:#333333;font-size:12px;">1.00</p>
<p style="left:528.5px;top:268px;width:200px;height:27px;line-height:27px;color:#333333;font-size:12px;">2.18</p>
<p style="left:588.5px;top:268px;width:200px;height:27px;line-height:27px;color:#2a5ab0;font-size:12px;">3.21</p>
<p style="left:648.5px;top:268px;width:200px;height:27px;line-height:27px;color:#333333;font-size:12px;">3.51</p>
<p style="left:697.0px;top:268px;width:200px;height:27px;line-height:27px;color:#0000ff;font-size:12px;"><i>平</i></p>
<p style="left:734.5px;top:268px;width:200px;height:27px;line-height:27px;color:#008000;font-size:12px;"><i>输</i></p>
<p style="left:779.5px;top:268px;width:200px;height:27px;line-height:27px;color:#008000;font-size:12px;"><i>小</i></p>
<div style="left:0px;top:294px;width:68px;height:27px;background:#0088ff;"></div>
<div style="left:69px;top:294px;width:70px;height:27px;background:#efefef;"></div>
<div style="left:140px;top:294px;width:86px;height:27px;background:#efefef;"></div>
<div style="left:227px;top:294px;width:82px;height:27px;background:#efefef;"></div>
<div style="left:310px;top:294px;width:37px;height:27px;background:#efefef;"></div>
<div style="left:348px;top:294px;width:103px;height:27px;background:#efefef;"></div>
<div style="left:452px;top:294px;width:39px;height:27px;background:#fdf9f7;"></div>
<div style="left:492px;top:294px;width:66px;height:27px;background:#fdf9f7;"></div>
<div style="left:559px;top:294px;width:39px;height:27px;background:#fdf9f7;"></div>
<div style="left:599px;top:294px;width:59px;height:27px;background:#f0f7fb;"></div>
<div style="left:659px;top:294px;width:59px;height:27px;background:#f0f7fb;"></div>
<div style="left:719px;top:294px;width:59px;height:27px;background:#f0f7fb;"></div>
<div style="left:779px;top:294px;width:36px;height:27px;background:#efefef;"></div>
<div style="left:816px;top:294px;width:37px;height:27px;background:#efefef;"></div>
<div style="left:854px;top:294px;width:52px;height:27px;background:#efefef;"></div>
<div style="left:68px;top:294px;width:1px;height:27px;background:#bbbbbb;"></div>
<div style="left:139px;top:294px;width:1px;height:27px;background:#bbbbbb;"></div>
<div style="left:226px;top:294px;width:1px;height:27px;background:#bbbbbb;"></div>
<div style="left:309px;top:294px;width:1px;height:27px;background:#bbbbbb;"></div>
<div style="left:347px;top:294px;width:1px;height:27px;background:#bbbbbb;"></div>
<div style="left:451px;top:294px;width:1px;height:27px;background:#bbbbbb;"></div>
<div style="left:491px;top:294px;width:1px;height:27px;background:#bbbbbb;"></div>
<div style="left:558px;top:294px;width:1px;height:27px;background:#bbbbbb;"></div>
<div style="left:598px;top:294px;width:1px;height:27px;background:#bbbbbb;"></div>
<div style="left:658px;top:294px;width:1px;height:27px;background:#bbbbbb;"></div>
<div style="left:718px;top:294px;width:1px;height:27px;background:#bbbbbb;"></div>
<div style="left:778px;top:294px;width:1px;height:27px;background:#bbbbbb;"></div>
<div style="left:815px;top:294px;width:1px;height:27px;background:#bbbbbb;"></div>
<div style="left:853px;top:294px;width:1px;height:27px;background:#bbbbbb;"></div>
<div style="left:0px;top:321px;width:901px;height:1px;background:#bbbbbb;"></div>
<p style="left:-67.5px;top:296px;width:200px;height:27px;line-height:27px;color:#fff;font-size:12px;"><i>意甲</i></p>
<p style="left:4.0px;top:296px;width:200px;height:27px;line-height:27px;color:#333333;font-size:12px;">24-09-23</p>
<p style="left:83.0px;top:296px;width:200px;height:27px;line-height:27px;color:#008000;font-size:12px;"><i>罗马</i></p>
<p style="left:168.0px;top:296px;width:200px;height:27px;line-height:27px;color:#333333;font-size:12px;"><span style="color:#ff0000">3-0</span>(1-0)</p>
<p style="left:228.5px;top:296px;width:200px;height:27px;line-height:27px;color:#333333;font-size:12px;">2-1</p>
<p style="left:299.5px;top:296px;width:200px;height:27px;line-height:27px;color:#000;font-size:12px;"><i>乌迪内斯</i></p>
<p style="left:371.5px;top:296px;width:200px;height:27px;line-height:27px;color:#333333;font-size:12px;">0.90</p>
<p style="left:425.0px;top:296px;width:200px;height:27px;line-height:27px;color:#1f4f9f;font-size:12px;"><i>半</i>/<i>一</i></p>
<p style="left:478.5px;top:296px;width:200px;height:27px;line-height:27px;color:#333333;font-size:12px;">0.99</p>
<p style="left:528.5px;top:296px;width:200px;height:27px;line-height:27px;color:#333333;font-size:12px;">1.66</p>
<p style="left:588.5px;top:296px;width:200px;height:27px;line-height:27px;color:#2a5ab0;font-size:12px;">3.95</p>
<p style="left:648.5px;top:296px;width:200px;height:27px;line-height:27px;color:#333333;font-size:12px;">4.99</p>
<p style="left:697.0px;top:296px;width:200px;height:27px;line-height:27px;color:#ff0000;font-size:12px;"><i>胜</i></p>
<p style="left:734.5px;top:296px;width:200px;height:27px;line-height:27px;color:#ff0000;font-size:12px;"><i>赢</i></p>
<p style="left:779.5px;top:296px;width:200px;height:27px;line-height:27px;color:#ff0000;font-size:12px;"><i>大</i></p>
<div style="left:0px;top:322px;width:68px;height:27px;background:#0088ff;"></div>
<div style="left:69px;top:322px;width:70px;height:27px;background:#ffffff;"></div>
<div style="left:140px;top:322px;width:86px;height:27px;background:#ffffff;"></div>
<div style="left:227px;top:322px;width:82px;height:27px;background:#ffffff;"></div>
<div style="left:310px;top:322px;width:37px;height:27px;background:#ffffff;"></div>
<div style="left:348px;top:322px;width:103px;height:27px;background:#ffffff;"></div>
<div style="left:452px;top:322px;width:39px;height:27px;background:#fdf9f7;"></div>
<div style="left:492px;top:322px;width:66px;height:27px;background:#fdf9f7;"></div>
<div style="left:559px;top:322px;width:39px;height:27px;background:#fdf9f7;"></div>
<div style="left:599px;top:322px;width:59px;height:27px;background:#f0f7fb;"></div>
<div style="left:659px;top:322px;width:59px;height:27px;background:#f0f7fb;"></div>
<div style="left:719px;top:322px;width:59px;height:27px;background:#f0f7fb;"></div>
<div style="left:779px;top:322px;width:36px;height:27px;background:#ffffff;"></div>
<div style="left:816px;top:322px;width:37px;height:27px;background:#ffffff;"></div>
<div style="left:854px;top:322px;width:52px;height:27px;background:#ffffff;"></div>
<div style="left:68px;top:322px;width:1px;height:27px;background:#bbbbbb;"></div>
<div style="left:139px;top:322px;width:1px;height:27px;background:#bbbbbb;"></div>
<div style="left:226px;top:322px;width:1px;height:27px;background:#bbbbbb;"></div>
<div style="left:309px;top:322px;width:1px;height:27px;background:#bbbbbb;"></div>
<div style="left:347px;top:322px;width:1px;height:27px;background:#bbbbbb;"></div>
<div style="left:451px;top:322px;width:1px;height:27px;background:#bbbbbb;"></div>
<div style="left:491px;top:322px;width:1px;height:27px;background:#bbbbbb;"></div>
<div style="left:558px;top:322px;width:1px;height:27px;background:#bbbbbb;"></div>
<div style="left:598px;top:322px;width:1px;height:27px;background:#bbbbbb;"></div>
<div style="left:658px;top:322px;width:1px;height:27px;background:#bbbbbb;"></div>
<div style="left:718px;top:322px;width:1px;height:27px;background:#bbbbbb;"></div>
<div style="left:778px;top:322px;width:1px;height:27px;background:#bbbbbb;"></div>
<div style="left:815px;top:322px;width:1px;height:27px;background:#bbbbbb;"></div>
<div style="left:853px;top:322px;width:1px;height:27px;background:#bbbbbb;"></div>
<div style="left:0px;top:349px;width:901px;height:1px;background:#bbbbbb;"></div>
<p style="left:-67.5px;top:324px;width:200px;height:27px;line-height:27px;color:#fff;font-size:12px;"><i>意甲</i></p>
<p style="left:4.0px;top:324px;width:200px;height:27px;line-height:27px;color:#333333;font-size:12px;">24-09-15</p>
<p style="left:83.0px;top:324px;width:200px;height:27px;line-height:27px;color:#000;font-size:12px;"><i>热那亚</i></p>
<p style="left:168.0px;top:324px;width:200px;height:27px;line-height:27px;color:#333333;font-size:12px;"><span style="color:#ff0000">1-1</span>(0-1)</p>
<p style="left:228.5px;top:324px;width:200px;height:27px;line-height:27px;color:#333333;font-size:12px;">4-5</p>
<p style="left:299.5px;top:324px;width:200px;height:27px;line-height:27px;color:#008000;font-size:12px;"><i>罗马</i></p>
<p style="left:371.5px;top:324px;width:200px;height:27px;line-height:27px;color:#333333;font-size:12px;">0.98</p>
<p style="left:425.0px;top:324px;width:200px;height:27px;line-height:27px;color:#1f4f9f;font-size:12px;"><span style="color:#ff0000">*</span><i>平</i>/<i>半</i></p>
<p style="left:478.5px;top:324px;width:200px;height:27px;line-height:27px;color:#333333;font-size:12px;">0.91</p>
<p style="left:528.5px;top:324px;width:200px;height:27px;line-height:27px;color:#333333;font-size:12px;">3.45</p>
<p style="left:588.5px;top:324px;width:200px;height:27px;line-height:27px;color:#2a5ab0;font-size:12px;">3.24</p>
<p style="left:648.5px;top:324px;width:200px;height:27px;line-height:27px;color:#333333;font-size:12px;">2.19</p>
<p style="left:697.0px;top:324px;width:200px;height:27px;line-height:27px;color:#0000ff;font-size:12px;"><i>平</i></p>
<p style="left:734.5px;top:324px;width:200px;height:27px;line-height:27px;color:#008000;font-size:12px;"><i>输</i></p>
<p style="left:779.5px;top:324px;width:200px;height:27px;line-height:27px;color:#008000;font-size:12px;"><i>小</i></p>
<div style="left:0px;top:350px;width:68px;height:27px;background:#0088ff;"></div>
<div style="left:69px;top:350px;width:70px;height:27px;background:#efefef;"></div>
<div style="left:140px;top:350px;width:86px;height:27px;background:#efefef;"></div>
<div style="left:227px;top:350px;width:82px;height:27px;background:#efefef;"></div>
<div style="left:310px;top:350px;width:37px;height:27px;background:#efefef;"></div>
<div style="left:348px;top:350px;width:103px;height:27px;background:#efefef;"></div>
<div style="left:452px;top:350px;width:39px;height:27px;background:#fdf9f7;"></div>
<div style="left:492px;top:350px;width:66px;height:27px;background:#fdf9f7;"></div>
<div style="left:559px;top:350px;width:39px;height:27px;background:#fdf9f7;"></div>
<div style="left:599px;top:350px;width:59px;height:27px;background:#f0f7fb;"></div>
<div style="left:659px;top:350px;width:59px;height:27px;background:#f0f7fb;"></div>
<div style="left:719px;top:350px;width:59px;height:27px;background:#f0f7fb;"></div>
<div style="left:779px;top:350px;width:36px;height:27px;background:#efefef;"></div>
<div style="left:816px;top:350px;width:37px;height:27px;background:#efefef;"></div>
<div style="left:854px;top:350px;width:52px;height:27px;background:#efefef;"></div>
<div style="left:68px;top:350px;width:1px;height:27px;background:#bbbbbb;"></div>
<div style="left:139px;top:350px;width:1px;height:27px;background:#bbbbbb;"></div>
<div style="left:226px;top:350px;width:1px;height:27px;background:#bbbbbb;"></div>
<div style="left:309px;top:350px;width:1px;height:27px;background:#bbbbbb;"></div>
<div style="left:347px;top:350px;width:1px;height:27px;background:#bbbbbb;"></div>
<div style="left:451px;top:350px;width:1px;height:27px;background:#bbbbbb;"></div>
<div style="left:491px;top:350px;width:1px;height:27px;background:#bbbbbb;"></div>
<div style="left:558px;top:350px;width:1px;height:27px;background:#bbbbbb;"></div>
<div style="left:598px;top:350px;width:1px;height:27px;background:#bbbbbb;"></div>
<div style="left:658px;top:350px;width:1px;height:27px;background:#bbbbbb;"></div>
<div style="left:718px;top:350px;width:1px;height:27px;background:#bbbbbb;"></div>
<div style="left:778px;top:350px;width:1px;height:27px;background:#bbbbbb;"></div>
<div style="left:815px;top:350px;width:1px;height:27px;background:#bbbbbb;"></div>
<div style="left:853px;top:350px;width:1px;height:27px;background:#bbbbbb;"></div>
<div style="left:0px;top:377px;width:901px;height:1px;background:#bbbbbb;"></div>
<p style="left:-67.5px;top:352px;width:200px;height:27px;line-height:27px;color:#fff;font-size:12px;"><i>意甲</i></p>
<p style="left:4.0px;top:352px;width:200px;height:27px;line-height:27px;color:#333333;font-size:12px;">24-09-02</p>
<p style="left:83.0px;top:352px;width:200px;height:27px;line-height:27px;color:#000;font-size:12px;"><i>尤文图斯</i></p>
<p style="left:168.0px;top:352px;width:200px;height:27px;line-height:27px;color:#333333;font-size:12px;"><span style="color:#ff0000">0-0</span>(0-0)</p>
<p style="left:228.5px;top:352px;width:200px;height:27px;line-height:27px;color:#333333;font-size:12px;">6-4</p>
<p style="left:299.5px;top:352px;width:200px;height:27px;line-height:27px;color:#008000;font-size:12px;"><i>罗马</i></p>
<p style="left:371.5px;top:352px;width:200px;height:27px;line-height:27px;color:#333333;font-size:12px;">1.04</p>
<p style="left:425.0px;top:352px;width:200px;height:27px;line-height:27px;color:#1f4f9f;font-size:12px;"><i>半</i>/<i>一</i></p>
<p style="left:478.5px;top:352px;width:200px;height:27px;line-height:27px;color:#333333;font-size:12px;">0.85</p>
<p style="left:528.5px;top:352px;width:200px;height:27px;line-height:27px;color:#333333;font-size:12px;">1.75</p>
<p style="left:588.5px;top:352px;width:200px;height:27px;line-height:27px;color:#2a5ab0;font-size:12px;">3.62</p>
<p style="left:648.5px;top:352px;width:200px;height:27px;line-height:27px;color:#333333;font-size:12px;">4.82</p>
<p style="left:697.0px;top:352px;width:200px;height:27px;line-height:27px;color:#0000ff;font-size:12px;"><i>平</i></p>
<p style="left:734.5px;top:352px;width:200px;height:27px;line-height:27px;color:#ff0000;font-size:12px;"><i>赢</i></p>
<p style="left:779.5px;top:352px;width:200px;height:27px;line-height:27px;color:#008000;font-size:12px;"><i>小</i></p>
<p style="left:280px;top:379px;height:27px;line-height:27px;font-size:12px;color:#000;text-align:left;"><i>近</i><span style="color:red">10</span><i>场</i>,<i>胜</i>3<i>平</i>4<i>负</i>3, <i>胜率</i>:</p>
<div style="left:412px;top:382px;width:35px;height:18px;line-height:20px;background:#007a00;color:#fff;text-align:center;font-size:12px;">30%</div>
<div style="left:479px;top:382px;width:35px;height:18px;line-height:20px;background:#007a00;color:#fff;text-align:center;font-size:12px;">20%</div>
<div style="left:534px;top:382px;width:34px;height:18px;line-height:20px;background:#007a00;color:#fff;text-align:center;font-size:12px;">30%</div>
<p style="left:450px;top:379px;height:27px;line-height:27px;font-size:12px;color:#000;text-align:left;"><i>赢率</i>:</p>
<p style="left:516.5px;top:379px;height:27px;line-height:27px;font-size:12px;color:#000;text-align:left;"><i>大</i>:</p>
<p style="left:572px;top:379px;height:27px;line-height:27px;font-size:12px;color:#000;text-align:left;"><i>单率</i>:</p>
<p style="left:601px;top:379px;height:27px;line-height:27px;font-size:12px;color:#0000ff;text-align:left;">50%</p>
<div style="left:0px;top:405px;width:901px;height:1px;background:#bbbbbb;"></div>
<div style="left:0px;top:406px;width:901px;height:25px;background:#dde3ec;"></div>
<p style="left:0.5px;top:409px;width:60px;height:25px;line-height:25px;color:#2550a8;font-size:13px;font-weight:bold;"><i>都灵</i></p>
<p style="left:350px;top:409px;height:25px;line-height:25px;font-size:12px;color:#000;white-space:nowrap;"><i>近</i></p>
<div class="sel small" style="left:366px;top:413px;width:36px;"><span class="st">10</span><svg class="chev" width="9" height="7" viewBox="0 0 9 7"><path d="M0.9 1.2 L4.5 4.9 L8.1 1.2" fill="none" stroke="#000" stroke-width="1.9"/></svg></div>
<p style="left:406px;top:409px;height:25px;line-height:25px;font-size:12px;color:#000;white-space:nowrap;"><i>场</i></p>
<div class="cb" style="left:422px;top:415px;"></div>
<p style="left:439px;top:409px;height:25px;line-height:25px;font-size:12px;color:#000;white-space:nowrap;"><i>同客</i></p>
<div class="cb on" style="left:466px;top:415px;"><svg width="13" height="13" viewBox="0 0 13 13"><path d="M2.6 6.8 L5.2 9.6 L10.3 3.3" fill="none" stroke="#fff" stroke-width="2"/></svg></div>
<p style="left:479px;top:409px;height:25px;line-height:25px;font-size:12px;color:#000;white-space:nowrap;"><i>意甲</i></p>
<div class="cb on" style="left:503px;top:415px;"><svg width="13" height="13" viewBox="0 0 13 13"><path d="M2.6 6.8 L5.2 9.6 L10.3 3.3" fill="none" stroke="#fff" stroke-width="2"/></svg></div>
<p style="left:516px;top:409px;height:25px;line-height:25px;font-size:12px;color:#000;white-space:nowrap;"><i>意杯</i></p>
<div class="cb on" style="left:540px;top:415px;"><svg width="13" height="13" viewBox="0 0 13 13"><path d="M2.6 6.8 L5.2 9.6 L10.3 3.3" fill="none" stroke="#fff" stroke-width="2"/></svg></div>
<p style="left:553px;top:409px;height:25px;line-height:25px;font-size:12px;color:#000;white-space:nowrap;"><i>球会友谊</i></p>
<div style="left:0px;top:431px;width:901px;height:1px;background:#bbbbbb;"></div>
<div style="left:0px;top:432px;width:901px;height:40px;background:#dde3ec;"></div>
<div style="left:405px;top:454px;width:496px;height:1px;background:#bbbbbb;"></div>
<div style="left:0px;top:472px;width:901px;height:1px;background:#bbbbbb;"></div>
<div style="left:38px;top:431px;width:1px;height:41px;background:#bbbbbb;"></div>
<div style="left:116px;top:431px;width:1px;height:41px;background:#bbbbbb;"></div>
<div style="left:194px;top:431px;width:1px;height:41px;background:#bbbbbb;"></div>
<div style="left:286px;top:431px;width:1px;height:41px;background:#bbbbbb;"></div>
<div style="left:327px;top:431px;width:1px;height:41px;background:#bbbbbb;"></div>
<div style="left:405px;top:431px;width:1px;height:41px;background:#bbbbbb;"></div>
<div style="left:566px;top:431px;width:1px;height:41px;background:#bbbbbb;"></div>
<div style="left:765px;top:431px;width:1px;height:41px;background:#bbbbbb;"></div>
<div style="left:451px;top:454px;width:1px;height:18px;background:#bbbbbb;"></div>
<div style="left:520px;top:454px;width:1px;height:18px;background:#bbbbbb;"></div>
<div style="left:633px;top:454px;width:1px;height:18px;background:#bbbbbb;"></div>
<div style="left:699px;top:454px;width:1px;height:18px;background:#bbbbbb;"></div>
<div style="left:806px;top:454px;width:1px;height:18px;background:#bbbbbb;"></div>
<div style="left:847px;top:454px;width:1px;height:18px;background:#bbbbbb;"></div>
<p style="left:-81.0px;top:434px;width:200px;height:40px;line-height:40px;color:#222;font-size:12px;"><i>类型</i></p>
<p style="left:-23.0px;top:434px;width:200px;height:40px;line-height:40px;color:#222;font-size:12px;"><i>日期</i></p>
<p style="left:55.0px;top:434px;width:200px;height:40px;line-height:40px;color:#222;font-size:12px;"><i>主场</i></p>
<p style="left:140.0px;top:434px;width:200px;height:40px;line-height:40px;color:#222;font-size:12px;"><i>比分</i>(<i>半场</i>)</p>
<p style="left:206.5px;top:434px;width:200px;height:40px;line-height:40px;color:#222;font-size:12px;"><i>角球</i></p>
<p style="left:266.0px;top:434px;width:200px;height:40px;line-height:40px;color:#222;font-size:12px;"><i>客场</i></p>
<p style="left:328.0px;top:457px;width:200px;height:17px;line-height:17px;color:#222;font-size:12px;"><i>主</i></p>
<p style="left:385.5px;top:457px;width:200px;height:17px;line-height:17px;color:#222;font-size:12px;"><i>盘口</i></p>
<p style="left:443.0px;top:457px;width:200px;height:17px;line-height:17px;color:#222;font-size:12px;"><i>客</i></p>
<p style="left:499.5px;top:457px;width:200px;height:17px;line-height:17px;color:#222;font-size:12px;"><i>主</i></p>
<p style="left:566.0px;top:457px;width:200px;height:17px;line-height:17px;color:#222;font-size:12px;"><i>和</i></p>
<p style="left:632.0px;top:457px;width:200px;height:17px;line-height:17px;color:#222;font-size:12px;"><i>客</i></p>
<p style="left:685.5px;top:457px;width:200px;height:17px;line-height:17px;color:#222;font-size:12px;"><i>胜负</i></p>
<p style="left:726.5px;top:457px;width:200px;height:17px;line-height:17px;color:#222;font-size:12px;"><i>让球</i></p>
<p style="left:776.0px;top:457px;width:200px;height:17px;line-height:17px;color:#222;font-size:12px;"><i>进球数</i></p>
<div class="sel" style="left:434px;top:433px;width:60px;font-size:13px;"><span class="st">Crow*</span><svg class="chev" width="9" height="7" viewBox="0 0 9 7"><path d="M0.9 1.2 L4.5 4.9 L8.1 1.2" fill="none" stroke="#000" stroke-width="1.9"/></svg></div>
<div class="sel" style="left:502px;top:433px;width:36px;font-size:12px;"><span class="st"><i>终</i></span><svg class="chev" width="9" height="7" viewBox="0 0 9 7"><path d="M0.9 1.2 L4.5 4.9 L8.1 1.2" fill="none" stroke="#000" stroke-width="1.9"/></svg></div>
<div class="sel" style="left:603px;top:433px;width:84px;font-size:12px;"><span class="st"><i>胜平负均值</i></span><svg class="chev" width="9" height="7" viewBox="0 0 9 7"><path d="M0.9 1.2 L4.5 4.9 L8.1 1.2" fill="none" stroke="#000" stroke-width="1.9"/></svg></div>
<div class="sel" style="left:694px;top:433px;width:36px;font-size:12px;"><span class="st"><i>终</i></span><svg class="chev" width="9" height="7" viewBox="0 0 9 7"><path d="M0.9 1.2 L4.5 4.9 L8.1 1.2" fill="none" stroke="#000" stroke-width="1.9"/></svg></div>
<div class="sel" style="left:812px;top:433px;width:48px;font-size:12px;"><span class="st"><i>全场</i></span><svg class="chev" width="9" height="7" viewBox="0 0 9 7"><path d="M0.9 1.2 L4.5 4.9 L8.1 1.2" fill="none" stroke="#000" stroke-width="1.9"/></svg></div>
<div style="left:0px;top:473px;width:38px;height:27px;background:#0088ff;"></div>
<div style="left:39px;top:473px;width:77px;height:27px;background:#ffffff;"></div>
<div style="left:117px;top:473px;width:77px;height:27px;background:#ffffff;"></div>
<div style="left:195px;top:473px;width:91px;height:27px;background:#ffffff;"></div>
<div style="left:287px;top:473px;width:40px;height:27px;background:#ffffff;"></div>
<div style="left:328px;top:473px;width:77px;height:27px;background:#ffffff;"></div>
<div style="left:406px;top:473px;width:45px;height:27px;background:#fdf9f7;"></div>
<div style="left:452px;top:473px;width:68px;height:27px;background:#fdf9f7;"></div>
<div style="left:521px;top:473px;width:45px;height:27px;background:#fdf9f7;"></div>
<div style="left:567px;top:473px;width:66px;height:27px;background:#f0f7fb;"></div>
<div style="left:634px;top:473px;width:65px;height:27px;background:#f0f7fb;"></div>
<div style="left:700px;top:473px;width:65px;height:27px;background:#f0f7fb;"></div>
<div style="left:766px;top:473px;width:40px;height:27px;background:#ffffff;"></div>
<div style="left:807px;top:473px;width:40px;height:27px;background:#ffffff;"></div>
<div style="left:848px;top:473px;width:58px;height:27px;background:#ffffff;"></div>
<div style="left:38px;top:473px;width:1px;height:27px;background:#bbbbbb;"></div>
<div style="left:116px;top:473px;width:1px;height:27px;background:#bbbbbb;"></div>
<div style="left:194px;top:473px;width:1px;height:27px;background:#bbbbbb;"></div>
<div style="left:286px;top:473px;width:1px;height:27px;background:#bbbbbb;"></div>
<div style="left:327px;top:473px;width:1px;height:27px;background:#bbbbbb;"></div>
<div style="left:405px;top:473px;width:1px;height:27px;background:#bbbbbb;"></div>
<div style="left:451px;top:473px;width:1px;height:27px;background:#bbbbbb;"></div>
<div style="left:520px;top:473px;width:1px;height:27px;background:#bbbbbb;"></div>
<div style="left:566px;top:473px;width:1px;height:27px;background:#bbbbbb;"></div>
<div style="left:633px;top:473px;width:1px;height:27px;background:#bbbbbb;"></div>
<div style="left:699px;top:473px;width:1px;height:27px;background:#bbbbbb;"></div>
<div style="left:765px;top:473px;width:1px;height:27px;background:#bbbbbb;"></div>
<div style="left:806px;top:473px;width:1px;height:27px;background:#bbbbbb;"></div>
<div style="left:847px;top:473px;width:1px;height:27px;background:#bbbbbb;"></div>
<div style="left:0px;top:500px;width:901px;height:1px;background:#bbbbbb;"></div>
<p style="left:-81.0px;top:475px;width:200px;height:27px;line-height:27px;color:#fff;font-size:12px;"><i>意甲</i></p>
<p style="left:-22.5px;top:475px;width:200px;height:27px;line-height:27px;color:#333333;font-size:12px;">24-10-26</p>
<p style="left:55.5px;top:475px;width:200px;height:27px;line-height:27px;color:#008000;font-size:12px;"><i>都灵</i></p>
<p style="left:140.5px;top:475px;width:200px;height:27px;line-height:27px;color:#333333;font-size:12px;"><span style="color:#ff0000">1-0</span>(0-0)</p>
<p style="left:207.0px;top:475px;width:200px;height:27px;line-height:27px;color:#333333;font-size:12px;">1-3</p>
<p style="left:266.5px;top:475px;width:200px;height:27px;line-height:27px;color:#000;font-size:12px;"><i>科莫</i></p>
<p style="left:328.5px;top:475px;width:200px;height:27px;line-height:27px;color:#333333;font-size:12px;">0.85</p>
<p style="left:386.0px;top:475px;width:200px;height:27px;line-height:27px;color:#1f4f9f;font-size:12px;"><i>平手</i></p>
<p style="left:443.5px;top:475px;width:200px;height:27px;line-height:27px;color:#333333;font-size:12px;">1.04</p>
<p style="left:500.0px;top:475px;width:200px;height:27px;line-height:27px;color:#333333;font-size:12px;">2.64</p>
<p style="left:566.5px;top:475px;width:200px;height:27px;line-height:27px;color:#2a5ab0;font-size:12px;">3.02</p>
<p style="left:632.5px;top:475px;width:200px;height:27px;line-height:27px;color:#333333;font-size:12px;">2.90</p>
<p style="left:686.0px;top:475px;width:200px;height:27px;line-height:27px;color:#ff0000;font-size:12px;"><i>胜</i></p>
<p style="left:727.0px;top:475px;width:200px;height:27px;line-height:27px;color:#ff0000;font-size:12px;"><i>赢</i></p>
<p style="left:776.0px;top:475px;width:200px;height:27px;line-height:27px;color:#008000;font-size:12px;"><i>小</i></p>
<div style="left:0px;top:501px;width:38px;height:27px;background:#0088ff;"></div>
<div style="left:39px;top:501px;width:77px;height:27px;background:#efefef;"></div>
<div style="left:117px;top:501px;width:77px;height:27px;background:#efefef;"></div>
<div style="left:195px;top:501px;width:91px;height:27px;background:#efefef;"></div>
<div style="left:287px;top:501px;width:40px;height:27px;background:#efefef;"></div>
<div style="left:328px;top:501px;width:77px;height:27px;background:#efefef;"></div>
<div style="left:406px;top:501px;width:45px;height:27px;background:#fdf9f7;"></div>
<div style="left:452px;top:501px;width:68px;height:27px;background:#fdf9f7;"></div>
<div style="left:521px;top:501px;width:45px;height:27px;background:#fdf9f7;"></div>
<div style="left:567px;top:501px;width:66px;height:27px;background:#f0f7fb;"></div>
<div style="left:634px;top:501px;width:65px;height:27px;background:#f0f7fb;"></div>
<div style="left:700px;top:501px;width:65px;height:27px;background:#f0f7fb;"></div>
<div style="left:766px;top:501px;width:40px;height:27px;background:#efefef;"></div>
<div style="left:807px;top:501px;width:40px;height:27px;background:#efefef;"></div>
<div style="left:848px;top:501px;width:58px;height:27px;background:#efefef;"></div>
<div style="left:38px;top:501px;width:1px;height:27px;background:#bbbbbb;"></div>
<div style="left:116px;top:501px;width:1px;height:27px;background:#bbbbbb;"></div>
<div style="left:194px;top:501px;width:1px;height:27px;background:#bbbbbb;"></div>
<div style="left:286px;top:501px;width:1px;height:27px;background:#bbbbbb;"></div>
<div style="left:327px;top:501px;width:1px;height:27px;background:#bbbbbb;"></div>
<div style="left:405px;top:501px;width:1px;height:27px;background:#bbbbbb;"></div>
<div style="left:451px;top:501px;width:1px;height:27px;background:#bbbbbb;"></div>
<div style="left:520px;top:501px;width:1px;height:27px;background:#bbbbbb;"></div>
<div style="left:566px;top:501px;width:1px;height:27px;background:#bbbbbb;"></div>
<div style="left:633px;top:501px;width:1px;height:27px;background:#bbbbbb;"></div>
<div style="left:699px;top:501px;width:1px;height:27px;background:#bbbbbb;"></div>
<div style="left:765px;top:501px;width:1px;height:27px;background:#bbbbbb;"></div>
<div style="left:806px;top:501px;width:1px;height:27px;background:#bbbbbb;"></div>
<div style="left:847px;top:501px;width:1px;height:27px;background:#bbbbbb;"></div>
<div style="left:0px;top:528px;width:901px;height:1px;background:#bbbbbb;"></div>
<p style="left:-81.0px;top:503px;width:200px;height:27px;line-height:27px;color:#fff;font-size:12px;"><i>意甲</i></p>
<p style="left:-22.5px;top:503px;width:200px;height:27px;line-height:27px;color:#333333;font-size:12px;">24-10-21</p>
<p style="left:55.5px;top:503px;width:200px;height:27px;line-height:27px;color:#000;font-size:12px;"><i>卡利亚里</i></p>
<p style="left:140.5px;top:503px;width:200px;height:27px;line-height:27px;color:#333333;font-size:12px;"><span style="color:#ff0000">3-2</span>(1-1)</p>
<p style="left:207.0px;top:503px;width:200px;height:27px;line-height:27px;color:#333333;font-size:12px;">9-12</p>
<p style="left:266.5px;top:503px;width:200px;height:27px;line-height:27px;color:#008000;font-size:12px;"><i>都灵</i></p>
<p style="left:328.5px;top:503px;width:200px;height:27px;line-height:27px;color:#333333;font-size:12px;">1.06</p>
<p style="left:386.0px;top:503px;width:200px;height:27px;line-height:27px;color:#1f4f9f;font-size:12px;"><i>平</i>/<i>半</i></p>
<p style="left:443.5px;top:503px;width:200px;height:27px;line-height:27px;color:#333333;font-size:12px;">0.83</p>
<p style="left:500.0px;top:503px;width:200px;height:27px;line-height:27px;color:#333333;font-size:12px;">2.42</p>
<p style="left:566.5px;top:503px;width:200px;height:27px;line-height:27px;color:#2a5ab0;font-size:12px;">3.02</p>
<p style="left:632.5px;top:503px;width:200px;height:27px;line-height:27px;color:#333333;font-size:12px;">3.24</p>
<p style="left:686.0px;top:503px;width:200px;height:27px;line-height:27px;color:#008000;font-size:12px;"><i>负</i></p>
<p style="left:727.0px;top:503px;width:200px;height:27px;line-height:27px;color:#008000;font-size:12px;"><i>输</i></p>
<p style="left:776.0px;top:503px;width:200px;height:27px;line-height:27px;color:#ff0000;font-size:12px;"><i>大</i></p>
<div style="left:0px;top:529px;width:38px;height:27px;background:#0088ff;"></div>
<div style="left:39px;top:529px;width:77px;height:27px;background:#ffffff;"></div>
<div style="left:117px;top:529px;width:77px;height:27px;background:#ffffff;"></div>
<div style="left:195px;top:529px;width:91px;height:27px;background:#ffffff;"></div>
<div style="left:287px;top:529px;width:40px;height:27px;background:#ffffff;"></div>
<div style="left:328px;top:529px;width:77px;height:27px;background:#ffffff;"></div>
<div style="left:406px;top:529px;width:45px;height:27px;background:#fdf9f7;"></div>
<div style="left:452px;top:529px;width:68px;height:27px;background:#fdf9f7;"></div>
<div style="left:521px;top:529px;width:45px;height:27px;background:#fdf9f7;"></div>
<div style="left:567px;top:529px;width:66px;height:27px;background:#f0f7fb;"></div>
<div style="left:634px;top:529px;width:65px;height:27px;background:#f0f7fb;"></div>
<div style="left:700px;top:529px;width:65px;height:27px;background:#f0f7fb;"></div>
<div style="left:766px;top:529px;width:40px;height:27px;background:#ffffff;"></div>
<div style="left:807px;top:529px;width:40px;height:27px;background:#ffffff;"></div>
<div style="left:848px;top:529px;width:58px;height:27px;background:#ffffff;"></div>
<div style="left:38px;top:529px;width:1px;height:27px;background:#bbbbbb;"></div>
<div style="left:116px;top:529px;width:1px;height:27px;background:#bbbbbb;"></div>
<div style="left:194px;top:529px;width:1px;height:27px;background:#bbbbbb;"></div>
<div style="left:286px;top:529px;width:1px;height:27px;background:#bbbbbb;"></div>
<div style="left:327px;top:529px;width:1px;height:27px;background:#bbbbbb;"></div>
<div style="left:405px;top:529px;width:1px;height:27px;background:#bbbbbb;"></div>
<div style="left:451px;top:529px;width:1px;height:27px;background:#bbbbbb;"></div>
<div style="left:520px;top:529px;width:1px;height:27px;background:#bbbbbb;"></div>
<div style="left:566px;top:529px;width:1px;height:27px;background:#bbbbbb;"></div>
<div style="left:633px;top:529px;width:1px;height:27px;background:#bbbbbb;"></div>
<div style="left:699px;top:529px;width:1px;height:27px;background:#bbbbbb;"></div>
<div style="left:765px;top:529px;width:1px;height:27px;background:#bbbbbb;"></div>
<div style="left:806px;top:529px;width:1px;height:27px;background:#bbbbbb;"></div>
<div style="left:847px;top:529px;width:1px;height:27px;background:#bbbbbb;"></div>
<div style="left:0px;top:556px;width:901px;height:1px;background:#bbbbbb;"></div>
<p style="left:-81.0px;top:531px;width:200px;height:27px;line-height:27px;color:#fff;font-size:12px;"><i>意甲</i></p>
<p style="left:-22.5px;top:531px;width:200px;height:27px;line-height:27px;color:#333333;font-size:12px;">24-10-06</p>
<p style="left:55.5px;top:531px;width:200px;height:27px;line-height:27px;color:#000;font-size:12px;"><i>国际米兰</i></p>
<p style="left:140.5px;top:531px;width:200px;height:27px;line-height:27px;color:#333333;font-size:12px;"><span style="color:#ff0000">3-2</span>(2-1)</p>
<p style="left:207.0px;top:531px;width:200px;height:27px;line-height:27px;color:#333333;font-size:12px;">14-0</p>
<p style="left:266.5px;top:531px;width:200px;height:27px;line-height:27px;color:#008000;font-size:12px;"><i>都灵</i><b class="rc">1</b></p>
<p style="left:328.5px;top:531px;width:200px;height:27px;line-height:27px;color:#333333;font-size:12px;">1.01</p>
<p style="left:386.0px;top:531px;width:200px;height:27px;line-height:27px;color:#1f4f9f;font-size:12px;"><i>球半</i></p>
<p style="left:443.5px;top:531px;width:200px;height:27px;line-height:27px;color:#333333;font-size:12px;">0.88</p>
<p style="left:500.0px;top:531px;width:200px;height:27px;line-height:27px;color:#333333;font-size:12px;">1.32</p>
<p style="left:566.5px;top:531px;width:200px;height:27px;line-height:27px;color:#2a5ab0;font-size:12px;">5.27</p>
<p style="left:632.5px;top:531px;width:200px;height:27px;line-height:27px;color:#333333;font-size:12px;">9.42</p>
<p style="left:686.0px;top:531px;width:200px;height:27px;line-height:27px;color:#008000;font-size:12px;"><i>负</i></p>
<p style="left:727.0px;top:531px;width:200px;height:27px;line-height:27px;color:#ff0000;font-size:12px;"><i>赢</i></p>
<p style="left:776.0px;top:531px;width:200px;height:27px;line-height:27px;color:#ff0000;font-size:12px;"><i>大</i></p>
<div style="left:0px;top:557px;width:38px;height:27px;background:#0088ff;"></div>
<div style="left:39px;top:557px;width:77px;height:27px;background:#efefef;"></div>
<div style="left:117px;top:557px;width:77px;height:27px;background:#efefef;"></div>
<div style="left:195px;top:557px;width:91px;height:27px;background:#efefef;"></div>
<div style="left:287px;top:557px;width:40px;height:27px;background:#efefef;"></div>
<div style="left:328px;top:557px;width:77px;height:27px;background:#efefef;"></div>
<div style="left:406px;top:557px;width:45px;height:27px;background:#fdf9f7;"></div>
<div style="left:452px;top:557px;width:68px;height:27px;background:#fdf9f7;"></div>
<div style="left:521px;top:557px;width:45px;height:27px;background:#fdf9f7;"></div>
<div style="left:567px;top:557px;width:66px;height:27px;background:#f0f7fb;"></div>
<div style="left:634px;top:557px;width:65px;height:27px;background:#f0f7fb;"></div>
<div style="left:700px;top:557px;width:65px;height:27px;background:#f0f7fb;"></div>
<div style="left:766px;top:557px;width:40px;height:27px;background:#efefef;"></div>
<div style="left:807px;top:557px;width:40px;height:27px;background:#efefef;"></div>
<div style="left:848px;top:557px;width:58px;height:27px;background:#efefef;"></div>
<div style="left:38px;top:557px;width:1px;height:27px;background:#bbbbbb;"></div>
<div style="left:116px;top:557px;width:1px;height:27px;background:#bbbbbb;"></div>
<div style="left:194px;top:557px;width:1px;height:27px;background:#bbbbbb;"></div>
<div style="left:286px;top:557px;width:1px;height:27px;background:#bbbbbb;"></div>
<div style="left:327px;top:557px;width:1px;height:27px;background:#bbbbbb;"></div>
<div style="left:405px;top:557px;width:1px;height:27px;background:#bbbbbb;"></div>
<div style="left:451px;top:557px;width:1px;height:27px;background:#bbbbbb;"></div>
<div style="left:520px;top:557px;width:1px;height:27px;background:#bbbbbb;"></div>
<div style="left:566px;top:557px;width:1px;height:27px;background:#bbbbbb;"></div>
<div style="left:633px;top:557px;width:1px;height:27px;background:#bbbbbb;"></div>
<div style="left:699px;top:557px;width:1px;height:27px;background:#bbbbbb;"></div>
<div style="left:765px;top:557px;width:1px;height:27px;background:#bbbbbb;"></div>
<div style="left:806px;top:557px;width:1px;height:27px;background:#bbbbbb;"></div>
<div style="left:847px;top:557px;width:1px;height:27px;background:#bbbbbb;"></div>
<div style="left:0px;top:584px;width:901px;height:1px;background:#bbbbbb;"></div>
<p style="left:-81.0px;top:559px;width:200px;height:27px;line-height:27px;color:#fff;font-size:12px;"><i>意甲</i></p>
<p style="left:-22.5px;top:559px;width:200px;height:27px;line-height:27px;color:#333333;font-size:12px;">24-09-29</p>
<p style="left:55.5px;top:559px;width:200px;height:27px;line-height:27px;color:#008000;font-size:12px;"><i>都灵</i></p>
<p style="left:140.5px;top:559px;width:200px;height:27px;line-height:27px;color:#333333;font-size:12px;"><span style="color:#ff0000">2-3</span>(0-1)</p>
<p style="left:207.0px;top:559px;width:200px;height:27px;line-height:27px;color:#333333;font-size:12px;">3-1</p>
<p style="left:266.5px;top:559px;width:200px;height:27px;line-height:27px;color:#000;font-size:12px;"><i>拉齐奥</i></p>
<p style="left:328.5px;top:559px;width:200px;height:27px;line-height:27px;color:#333333;font-size:12px;">0.75</p>
<p style="left:386.0px;top:559px;width:200px;height:27px;line-height:27px;color:#1f4f9f;font-size:12px;"><span style="color:#ff0000">*</span><i>平</i>/<i>半</i></p>
<p style="left:443.5px;top:559px;width:200px;height:27px;line-height:27px;color:#333333;font-size:12px;">1.16</p>
<p style="left:500.0px;top:559px;width:200px;height:27px;line-height:27px;color:#333333;font-size:12px;">2.99</p>
<p style="left:566.5px;top:559px;width:200px;height:27px;line-height:27px;color:#2a5ab0;font-size:12px;">3.11</p>
<p style="left:632.5px;top:559px;width:200px;height:27px;line-height:27px;color:#333333;font-size:12px;">2.50</p>
<p style="left:686.0px;top:559px;width:200px;height:27px;line-height:27px;color:#008000;font-size:12px;"><i>负</i></p>
<p style="left:727.0px;top:559px;width:200px;height:27px;line-height:27px;color:#008000;font-size:12px;"><i>输</i></p>
<p style="left:776.0px;top:559px;width:200px;height:27px;line-height:27px;color:#ff0000;font-size:12px;"><i>大</i></p>
<div style="left:0px;top:585px;width:38px;height:27px;background:#4040ff;"></div>
<div style="left:39px;top:585px;width:77px;height:27px;background:#ffffff;"></div>
<div style="left:117px;top:585px;width:77px;height:27px;background:#ffffff;"></div>
<div style="left:195px;top:585px;width:91px;height:27px;background:#ffffff;"></div>
<div style="left:287px;top:585px;width:40px;height:27px;background:#ffffff;"></div>
<div style="left:328px;top:585px;width:77px;height:27px;background:#ffffff;"></div>
<div style="left:406px;top:585px;width:45px;height:27px;background:#fdf9f7;"></div>
<div style="left:452px;top:585px;width:68px;height:27px;background:#fdf9f7;"></div>
<div style="left:521px;top:585px;width:45px;height:27px;background:#fdf9f7;"></div>
<div style="left:567px;top:585px;width:66px;height:27px;background:#f0f7fb;"></div>
<div style="left:634px;top:585px;width:65px;height:27px;background:#f0f7fb;"></div>
<div style="left:700px;top:585px;width:65px;height:27px;background:#f0f7fb;"></div>
<div style="left:766px;top:585px;width:40px;height:27px;background:#ffffff;"></div>
<div style="left:807px;top:585px;width:40px;height:27px;background:#ffffff;"></div>
<div style="left:848px;top:585px;width:58px;height:27px;background:#ffffff;"></div>
<div style="left:38px;top:585px;width:1px;height:27px;background:#bbbbbb;"></div>
<div style="left:116px;top:585px;width:1px;height:27px;background:#bbbbbb;"></div>
<div style="left:194px;top:585px;width:1px;height:27px;background:#bbbbbb;"></div>
<div style="left:286px;top:585px;width:1px;height:27px;background:#bbbbbb;"></div>
<div style="left:327px;top:585px;width:1px;height:27px;background:#bbbbbb;"></div>
<div style="left:405px;top:585px;width:1px;height:27px;background:#bbbbbb;"></div>
<div style="left:451px;top:585px;width:1px;height:27px;background:#bbbbbb;"></div>
<div style="left:520px;top:585px;width:1px;height:27px;background:#bbbbbb;"></div>
<div style="left:566px;top:585px;width:1px;height:27px;background:#bbbbbb;"></div>
<div style="left:633px;top:585px;width:1px;height:27px;background:#bbbbbb;"></div>
<div style="left:699px;top:585px;width:1px;height:27px;background:#bbbbbb;"></div>
<div style="left:765px;top:585px;width:1px;height:27px;background:#bbbbbb;"></div>
<div style="left:806px;top:585px;width:1px;height:27px;background:#bbbbbb;"></div>
<div style="left:847px;top:585px;width:1px;height:27px;background:#bbbbbb;"></div>
<div style="left:0px;top:612px;width:901px;height:1px;background:#bbbbbb;"></div>
<p style="left:-81.0px;top:587px;width:200px;height:27px;line-height:27px;color:#fff;font-size:12px;"><i>意杯</i></p>
<p style="left:-22.5px;top:587px;width:200px;height:27px;line-height:27px;color:#333333;font-size:12px;">24-09-25</p>
<p style="left:55.5px;top:587px;width:200px;height:27px;line-height:27px;color:#008000;font-size:12px;"><i>都灵</i></p>
<p style="left:140.5px;top:587px;width:200px;height:27px;line-height:27px;color:#333333;font-size:12px;"><span style="color:#ff0000">1-2</span>(0-1)</p>
<p style="left:207.0px;top:587px;width:200px;height:27px;line-height:27px;color:#333333;font-size:12px;">5-4</p>
<p style="left:266.5px;top:587px;width:200px;height:27px;line-height:27px;color:#000;font-size:12px;"><i>恩波利</i></p>
<p style="left:328.5px;top:587px;width:200px;height:27px;line-height:27px;color:#333333;font-size:12px;">1.05</p>
<p style="left:386.0px;top:587px;width:200px;height:27px;line-height:27px;color:#1f4f9f;font-size:12px;"><i>一球</i></p>
<p style="left:443.5px;top:587px;width:200px;height:27px;line-height:27px;color:#333333;font-size:12px;">0.84</p>
<p style="left:500.0px;top:587px;width:200px;height:27px;line-height:27px;color:#333333;font-size:12px;">1.58</p>
<p style="left:566.5px;top:587px;width:200px;height:27px;line-height:27px;color:#2a5ab0;font-size:12px;">3.74</p>
<p style="left:632.5px;top:587px;width:200px;height:27px;line-height:27px;color:#333333;font-size:12px;">5.96</p>
<p style="left:686.0px;top:587px;width:200px;height:27px;line-height:27px;color:#008000;font-size:12px;"><i>负</i></p>
<p style="left:727.0px;top:587px;width:200px;height:27px;line-height:27px;color:#008000;font-size:12px;"><i>输</i></p>
<p style="left:776.0px;top:587px;width:200px;height:27px;line-height:27px;color:#ff0000;font-size:12px;"><i>大</i></p>
<div style="left:0px;top:613px;width:38px;height:27px;background:#0088ff;"></div>
<div style="left:39px;top:613px;width:77px;height:27px;background:#efefef;"></div>
<div style="left:117px;top:613px;width:77px;height:27px;background:#efefef;"></div>
<div style="left:195px;top:613px;width:91px;height:27px;background:#efefef;"></div>
<div style="left:287px;top:613px;width:40px;height:27px;background:#efefef;"></div>
<div style="left:328px;top:613px;width:77px;height:27px;background:#efefef;"></div>
<div style="left:406px;top:613px;width:45px;height:27px;background:#fdf9f7;"></div>
<div style="left:452px;top:613px;width:68px;height:27px;background:#fdf9f7;"></div>
<div style="left:521px;top:613px;width:45px;height:27px;background:#fdf9f7;"></div>
<div style="left:567px;top:613px;width:66px;height:27px;background:#f0f7fb;"></div>
<div style="left:634px;top:613px;width:65px;height:27px;background:#f0f7fb;"></div>
<div style="left:700px;top:613px;width:65px;height:27px;background:#f0f7fb;"></div>
<div style="left:766px;top:613px;width:40px;height:27px;background:#efefef;"></div>
<div style="left:807px;top:613px;width:40px;height:27px;background:#efefef;"></div>
<div style="left:848px;top:613px;width:58px;height:27px;background:#efefef;"></div>
<div style="left:38px;top:613px;width:1px;height:27px;background:#bbbbbb;"></div>
<div style="left:116px;top:613px;width:1px;height:27px;background:#bbbbbb;"></div>
<div style="left:194px;top:613px;width:1px;height:27px;background:#bbbbbb;"></div>
<div style="left:286px;top:613px;width:1px;height:27px;background:#bbbbbb;"></div>
<div style="left:327px;top:613px;width:1px;height:27px;background:#bbbbbb;"></div>
<div style="left:405px;top:613px;width:1px;height:27px;background:#bbbbbb;"></div>
<div style="left:451px;top:613px;width:1px;height:27px;background:#bbbbbb;"></div>
<div style="left:520px;top:613px;width:1px;height:27px;background:#bbbbbb;"></div>
<div style="left:566px;top:613px;width:1px;height:27px;background:#bbbbbb;"></div>
<div style="left:633px;top:613px;width:1px;height:27px;background:#bbbbbb;"></div>
<div style="left:699px;top:613px;width:1px;height:27px;background:#bbbbbb;"></div>
<div style="left:765px;top:613px;width:1px;height:27px;background:#bbbbbb;"></div>
<div style="left:806px;top:613px;width:1px;height:27px;background:#bbbbbb;"></div>
<div style="left:847px;top:613px;width:1px;height:27px;background:#bbbbbb;"></div>
<div style="left:0px;top:640px;width:901px;height:1px;background:#bbbbbb;"></div>
<p style="left:-81.0px;top:615px;width:200px;height:27px;line-height:27px;color:#fff;font-size:12px;"><i>意甲</i></p>
<p style="left:-22.5px;top:615px;width:200px;height:27px;line-height:27px;color:#333333;font-size:12px;">24-09-21</p>
<p style="left:55.5px;top:615px;width:200px;height:27px;line-height:27px;color:#000;font-size:12px;"><b class="rc">1</b><i>维罗纳</i></p>
<p style="left:140.5px;top:615px;width:200px;height:27px;line-height:27px;color:#333333;font-size:12px;"><span style="color:#ff0000">2-3</span>(1-2)</p>
<p style="left:207.0px;top:615px;width:200px;height:27px;line-height:27px;color:#333333;font-size:12px;">5-6</p>
<p style="left:266.5px;top:615px;width:200px;height:27px;line-height:27px;color:#008000;font-size:12px;"><i>都灵</i></p>
<p style="left:328.5px;top:615px;width:200px;height:27px;line-height:27px;color:#333333;font-size:12px;">0.97</p>
<p style="left:386.0px;top:615px;width:200px;height:27px;line-height:27px;color:#1f4f9f;font-size:12px;"><i>平手</i></p>
<p style="left:443.5px;top:615px;width:200px;height:27px;line-height:27px;color:#333333;font-size:12px;">0.92</p>
<p style="left:500.0px;top:615px;width:200px;height:27px;line-height:27px;color:#333333;font-size:12px;">2.78</p>
<p style="left:566.5px;top:615px;width:200px;height:27px;line-height:27px;color:#2a5ab0;font-size:12px;">2.98</p>
<p style="left:632.5px;top:615px;width:200px;height:27px;line-height:27px;color:#333333;font-size:12px;">2.79</p>
<p style="left:686.0px;top:615px;width:200px;height:27px;line-height:27px;color:#ff0000;font-size:12px;"><i>胜</i></p>
<p style="left:727.0px;top:615px;width:200px;height:27px;line-height:27px;color:#ff0000;font-size:12px;"><i>赢</i></p>
<p style="left:776.0px;top:615px;width:200px;height:27px;line-height:27px;color:#ff0000;font-size:12px;"><i>大</i></p>
<div style="left:0px;top:641px;width:38px;height:27px;background:#0088ff;"></div>
<div style="left:39px;top:641px;width:77px;height:27px;background:#ffffff;"></div>
<div style="left:117px;top:641px;width:77px;height:27px;background:#ffffff;"></div>
<div style="left:195px;top:641px;width:91px;height:27px;background:#ffffff;"></div>
<div style="left:287px;top:641px;width:40px;height:27px;background:#ffffff;"></div>
<div style="left:328px;top:641px;width:77px;height:27px;background:#ffffff;"></div>
<div style="left:406px;top:641px;width:45px;height:27px;background:#fdf9f7;"></div>
<div style="left:452px;top:641px;width:68px;height:27px;background:#fdf9f7;"></div>
<div style="left:521px;top:641px;width:45px;height:27px;background:#fdf9f7;"></div>
<div style="left:567px;top:641px;width:66px;height:27px;background:#f0f7fb;"></div>
<div style="left:634px;top:641px;width:65px;height:27px;background:#f0f7fb;"></div>
<div style="left:700px;top:641px;width:65px;height:27px;background:#f0f7fb;"></div>
<div style="left:766px;top:641px;width:40px;height:27px;background:#ffffff;"></div>
<div style="left:807px;top:641px;width:40px;height:27px;background:#ffffff;"></div>
<div style="left:848px;top:641px;width:58px;height:27px;background:#ffffff;"></div>
<div style="left:38px;top:641px;width:1px;height:27px;background:#bbbbbb;"></div>
<div style="left:116px;top:641px;width:1px;height:27px;background:#bbbbbb;"></div>
<div style="left:194px;top:641px;width:1px;height:27px;background:#bbbbbb;"></div>
<div style="left:286px;top:641px;width:1px;height:27px;background:#bbbbbb;"></div>
<div style="left:327px;top:641px;width:1px;height:27px;background:#bbbbbb;"></div>
<div style="left:405px;top:641px;width:1px;height:27px;background:#bbbbbb;"></div>
<div style="left:451px;top:641px;width:1px;height:27px;background:#bbbbbb;"></div>
<div style="left:520px;top:641px;width:1px;height:27px;background:#bbbbbb;"></div>
<div style="left:566px;top:641px;width:1px;height:27px;background:#bbbbbb;"></div>
<div style="left:633px;top:641px;width:1px;height:27px;background:#bbbbbb;"></div>
<div style="left:699px;top:641px;width:1px;height:27px;background:#bbbbbb;"></div>
<div style="left:765px;top:641px;width:1px;height:27px;background:#bbbbbb;"></div>
<div style="left:806px;top:641px;width:1px;height:27px;background:#bbbbbb;"></div>
<div style="left:847px;top:641px;width:1px;height:27px;background:#bbbbbb;"></div>
<div style="left:0px;top:668px;width:901px;height:1px;background:#bbbbbb;"></div>
<p style="left:-81.0px;top:643px;width:200px;height:27px;line-height:27px;color:#fff;font-size:12px;"><i>意甲</i></p>
<p style="left:-22.5px;top:643px;width:200px;height:27px;line-height:27px;color:#333333;font-size:12px;">24-09-15</p>
<p style="left:55.5px;top:643px;width:200px;height:27px;line-height:27px;color:#008000;font-size:12px;"><i>都灵</i></p>
<p style="left:140.5px;top:643px;width:200px;height:27px;line-height:27px;color:#333333;font-size:12px;"><span style="color:#ff0000">0-0</span>(0-0)</p>
<p style="left:207.0px;top:643px;width:200px;height:27px;line-height:27px;color:#333333;font-size:12px;">2-7</p>
<p style="left:266.5px;top:643px;width:200px;height:27px;line-height:27px;color:#000;font-size:12px;"><i>莱切</i></p>
<p style="left:328.5px;top:643px;width:200px;height:27px;line-height:27px;color:#333333;font-size:12px;">0.95</p>
<p style="left:386.0px;top:643px;width:200px;height:27px;line-height:27px;color:#1f4f9f;font-size:12px;"><i>半球</i></p>
<p style="left:443.5px;top:643px;width:200px;height:27px;line-height:27px;color:#333333;font-size:12px;">0.94</p>
<p style="left:500.0px;top:643px;width:200px;height:27px;line-height:27px;color:#333333;font-size:12px;">1.88</p>
<p style="left:566.5px;top:643px;width:200px;height:27px;line-height:27px;color:#2a5ab0;font-size:12px;">3.33</p>
<p style="left:632.5px;top:643px;width:200px;height:27px;line-height:27px;color:#333333;font-size:12px;">4.51</p>
<p style="left:686.0px;top:643px;width:200px;height:27px;line-height:27px;color:#0000ff;font-size:12px;"><i>平</i></p>
<p style="left:727.0px;top:643px;width:200px;height:27px;line-height:27px;color:#008000;font-size:12px;"><i>输</i></p>
<p style="left:776.0px;top:643px;width:200px;height:27px;line-height:27px;color:#008000;font-size:12px;"><i>小</i></p>
<div style="left:0px;top:669px;width:38px;height:27px;background:#0088ff;"></div>
<div style="left:39px;top:669px;width:77px;height:27px;background:#efefef;"></div>
<div style="left:117px;top:669px;width:77px;height:27px;background:#efefef;"></div>
<div style="left:195px;top:669px;width:91px;height:27px;background:#efefef;"></div>
<div style="left:287px;top:669px;width:40px;height:27px;background:#efefef;"></div>
<div style="left:328px;top:669px;width:77px;height:27px;background:#efefef;"></div>
<div style="left:406px;top:669px;width:45px;height:27px;background:#fdf9f7;"></div>
<div style="left:452px;top:669px;width:68px;height:27px;background:#fdf9f7;"></div>
<div style="left:521px;top:669px;width:45px;height:27px;background:#fdf9f7;"></div>
<div style="left:567px;top:669px;width:66px;height:27px;background:#f0f7fb;"></div>
<div style="left:634px;top:669px;width:65px;height:27px;background:#f0f7fb;"></div>
<div style="left:700px;top:669px;width:65px;height:27px;background:#f0f7fb;"></div>
<div style="left:766px;top:669px;width:40px;height:27px;background:#efefef;"></div>
<div style="left:807px;top:669px;width:40px;height:27px;background:#efefef;"></div>
<div style="left:848px;top:669px;width:58px;height:27px;background:#efefef;"></div>
<div style="left:38px;top:669px;width:1px;height:27px;background:#bbbbbb;"></div>
<div style="left:116px;top:669px;width:1px;height:27px;background:#bbbbbb;"></div>
<div style="left:194px;top:669px;width:1px;height:27px;background:#bbbbbb;"></div>
<div style="left:286px;top:669px;width:1px;height:27px;background:#bbbbbb;"></div>
<div style="left:327px;top:669px;width:1px;height:27px;background:#bbbbbb;"></div>
<div style="left:405px;top:669px;width:1px;height:27px;background:#bbbbbb;"></div>
<div style="left:451px;top:669px;width:1px;height:27px;background:#bbbbbb;"></div>
<div style="left:520px;top:669px;width:1px;height:27px;background:#bbbbbb;"></div>
<div style="left:566px;top:669px;width:1px;height:27px;background:#bbbbbb;"></div>
<div style="left:633px;top:669px;width:1px;height:27px;background:#bbbbbb;"></div>
<div style="left:699px;top:669px;width:1px;height:27px;background:#bbbbbb;"></div>
<div style="left:765px;top:669px;width:1px;height:27px;background:#bbbbbb;"></div>
<div style="left:806px;top:669px;width:1px;height:27px;background:#bbbbbb;"></div>
<div style="left:847px;top:669px;width:1px;height:27px;background:#bbbbbb;"></div>
<div style="left:0px;top:696px;width:901px;height:1px;background:#bbbbbb;"></div>
<p style="left:-81.0px;top:671px;width:200px;height:27px;line-height:27px;color:#fff;font-size:12px;"><i>意甲</i></p>
<p style="left:-22.5px;top:671px;width:200px;height:27px;line-height:27px;color:#333333;font-size:12px;">24-08-31</p>
<p style="left:55.5px;top:671px;width:200px;height:27px;line-height:27px;color:#000;font-size:12px;"><i>威尼斯</i></p>
<p style="left:140.5px;top:671px;width:200px;height:27px;line-height:27px;color:#333333;font-size:12px;"><span style="color:#ff0000">0-1</span>(0-0)</p>
<p style="left:207.0px;top:671px;width:200px;height:27px;line-height:27px;color:#333333;font-size:12px;">3-3</p>
<p style="left:266.5px;top:671px;width:200px;height:27px;line-height:27px;color:#008000;font-size:12px;"><i>都灵</i></p>
<p style="left:328.5px;top:671px;width:200px;height:27px;line-height:27px;color:#333333;font-size:12px;">0.91</p>
<p style="left:386.0px;top:671px;width:200px;height:27px;line-height:27px;color:#1f4f9f;font-size:12px;"><span style="color:#ff0000">*</span><i>平</i>/<i>半</i></p>
<p style="left:443.5px;top:671px;width:200px;height:27px;line-height:27px;color:#333333;font-size:12px;">0.98</p>
<p style="left:500.0px;top:671px;width:200px;height:27px;line-height:27px;color:#333333;font-size:12px;">3.43</p>
<p style="left:566.5px;top:671px;width:200px;height:27px;line-height:27px;color:#2a5ab0;font-size:12px;">3.26</p>
<p style="left:632.5px;top:671px;width:200px;height:27px;line-height:27px;color:#333333;font-size:12px;">2.19</p>
<p style="left:686.0px;top:671px;width:200px;height:27px;line-height:27px;color:#ff0000;font-size:12px;"><i>胜</i></p>
<p style="left:727.0px;top:671px;width:200px;height:27px;line-height:27px;color:#ff0000;font-size:12px;"><i>赢</i></p>
<p style="left:776.0px;top:671px;width:200px;height:27px;line-height:27px;color:#008000;font-size:12px;"><i>小</i></p>
<div style="left:0px;top:697px;width:38px;height:27px;background:#0088ff;"></div>
<div style="left:39px;top:697px;width:77px;height:27px;background:#ffffff;"></div>
<div style="left:117px;top:697px;width:77px;height:27px;background:#ffffff;"></div>
<div style="left:195px;top:697px;width:91px;height:27px;background:#ffffff;"></div>
<div style="left:287px;top:697px;width:40px;height:27px;background:#ffffff;"></div>
<div style="left:328px;top:697px;width:77px;height:27px;background:#ffffff;"></div>
<div style="left:406px;top:697px;width:45px;height:27px;background:#fdf9f7;"></div>
<div style="left:452px;top:697px;width:68px;height:27px;background:#fdf9f7;"></div>
<div style="left:521px;top:697px;width:45px;height:27px;background:#fdf9f7;"></div>
<div style="left:567px;top:697px;width:66px;height:27px;background:#f0f7fb;"></div>
<div style="left:634px;top:697px;width:65px;height:27px;background:#f0f7fb;"></div>
<div style="left:700px;top:697px;width:65px;height:27px;background:#f0f7fb;"></div>
<div style="left:766px;top:697px;width:40px;height:27px;background:#ffffff;"></div>
<div style="left:807px;top:697px;width:40px;height:27px;background:#ffffff;"></div>
<div style="left:848px;top:697px;width:58px;height:27px;background:#ffffff;"></div>
<div style="left:38px;top:697px;width:1px;height:27px;background:#bbbbbb;"></div>
<div style="left:116px;top:697px;width:1px;height:27px;background:#bbbbbb;"></div>
<div style="left:194px;top:697px;width:1px;height:27px;background:#bbbbbb;"></div>
<div style="left:286px;top:697px;width:1px;height:27px;background:#bbbbbb;"></div>
<div style="left:327px;top:697px;width:1px;height:27px;background:#bbbbbb;"></div>
<div style="left:405px;top:697px;width:1px;height:27px;background:#bbbbbb;"></div>
<div style="left:451px;top:697px;width:1px;height:27px;background:#bbbbbb;"></div>
<div style="left:520px;top:697px;width:1px;height:27px;background:#bbbbbb;"></div>
<div style="left:566px;top:697px;width:1px;height:27px;background:#bbbbbb;"></div>
<div style="left:633px;top:697px;width:1px;height:27px;background:#bbbbbb;"></div>
<div style="left:699px;top:697px;width:1px;height:27px;background:#bbbbbb;"></div>
<div style="left:765px;top:697px;width:1px;height:27px;background:#bbbbbb;"></div>
<div style="left:806px;top:697px;width:1px;height:27px;background:#bbbbbb;"></div>
<div style="left:847px;top:697px;width:1px;height:27px;background:#bbbbbb;"></div>
<div style="left:0px;top:724px;width:901px;height:1px;background:#bbbbbb;"></div>
<p style="left:-81.0px;top:699px;width:200px;height:27px;line-height:27px;color:#fff;font-size:12px;"><i>意甲</i></p>
<p style="left:-22.5px;top:699px;width:200px;height:27px;line-height:27px;color:#333333;font-size:12px;">24-08-26</p>
<p style="left:55.5px;top:699px;width:200px;height:27px;line-height:27px;color:#008000;font-size:12px;"><i>都灵</i></p>
<p style="left:140.5px;top:699px;width:200px;height:27px;line-height:27px;color:#333333;font-size:12px;"><span style="color:#ff0000">2-1</span>(1-1)</p>
<p style="left:207.0px;top:699px;width:200px;height:27px;line-height:27px;color:#333333;font-size:12px;">4-6</p>
<p style="left:266.5px;top:699px;width:200px;height:27px;line-height:27px;color:#000;font-size:12px;"><i>亚特兰大</i></p>
<p style="left:328.5px;top:699px;width:200px;height:27px;line-height:27px;color:#333333;font-size:12px;">0.97</p>
<p style="left:386.0px;top:699px;width:200px;height:27px;line-height:27px;color:#1f4f9f;font-size:12px;"><span style="color:#ff0000">*</span><i>平</i>/<i>半</i></p>
<p style="left:443.5px;top:699px;width:200px;height:27px;line-height:27px;color:#333333;font-size:12px;">0.92</p>
<p style="left:500.0px;top:699px;width:200px;height:27px;line-height:27px;color:#333333;font-size:12px;">3.49</p>
<p style="left:566.5px;top:699px;width:200px;height:27px;line-height:27px;color:#2a5ab0;font-size:12px;">3.25</p>
<p style="left:632.5px;top:699px;width:200px;height:27px;line-height:27px;color:#333333;font-size:12px;">2.17</p>
<p style="left:686.0px;top:699px;width:200px;height:27px;line-height:27px;color:#ff0000;font-size:12px;"><i>胜</i></p>
<p style="left:727.0px;top:699px;width:200px;height:27px;line-height:27px;color:#ff0000;font-size:12px;"><i>赢</i></p>
<p style="left:776.0px;top:699px;width:200px;height:27px;line-height:27px;color:#ff0000;font-size:12px;"><i>大</i></p>
<div style="left:0px;top:725px;width:38px;height:27px;background:#0088ff;"></div>
<div style="left:39px;top:725px;width:77px;height:27px;background:#efefef;"></div>
<div style="left:117px;top:725px;width:77px;height:27px;background:#efefef;"></div>
<div style="left:195px;top:725px;width:91px;height:27px;background:#efefef;"></div>
<div style="left:287px;top:725px;width:40px;height:27px;background:#efefef;"></div>
<div style="left:328px;top:725px;width:77px;height:27px;background:#efefef;"></div>
<div style="left:406px;top:725px;width:45px;height:27px;background:#fdf9f7;"></div>
<div style="left:452px;top:725px;width:68px;height:27px;background:#fdf9f7;"></div>
<div style="left:521px;top:725px;width:45px;height:27px;background:#fdf9f7;"></div>
<div style="left:567px;top:725px;width:66px;height:27px;background:#f0f7fb;"></div>
<div style="left:634px;top:725px;width:65px;height:27px;background:#f0f7fb;"></div>
<div style="left:700px;top:725px;width:65px;height:27px;background:#f0f7fb;"></div>
<div style="left:766px;top:725px;width:40px;height:27px;background:#efefef;"></div>
<div style="left:807px;top:725px;width:40px;height:27px;background:#efefef;"></div>
<div style="left:848px;top:725px;width:58px;height:27px;background:#efefef;"></div>
<div style="left:38px;top:725px;width:1px;height:27px;background:#bbbbbb;"></div>
<div style="left:116px;top:725px;width:1px;height:27px;background:#bbbbbb;"></div>
<div style="left:194px;top:725px;width:1px;height:27px;background:#bbbbbb;"></div>
<div style="left:286px;top:725px;width:1px;height:27px;background:#bbbbbb;"></div>
<div style="left:327px;top:725px;width:1px;height:27px;background:#bbbbbb;"></div>
<div style="left:405px;top:725px;width:1px;height:27px;background:#bbbbbb;"></div>
<div style="left:451px;top:725px;width:1px;height:27px;background:#bbbbbb;"></div>
<div style="left:520px;top:725px;width:1px;height:27px;background:#bbbbbb;"></div>
<div style="left:566px;top:725px;width:1px;height:27px;background:#bbbbbb;"></div>
<div style="left:633px;top:725px;width:1px;height:27px;background:#bbbbbb;"></div>
<div style="left:699px;top:725px;width:1px;height:27px;background:#bbbbbb;"></div>
<div style="left:765px;top:725px;width:1px;height:27px;background:#bbbbbb;"></div>
<div style="left:806px;top:725px;width:1px;height:27px;background:#bbbbbb;"></div>
<div style="left:847px;top:725px;width:1px;height:27px;background:#bbbbbb;"></div>
<div style="left:0px;top:752px;width:901px;height:1px;background:#bbbbbb;"></div>
<p style="left:-81.0px;top:727px;width:200px;height:27px;line-height:27px;color:#fff;font-size:12px;"><i>意甲</i></p>
<p style="left:-22.5px;top:727px;width:200px;height:27px;line-height:27px;color:#333333;font-size:12px;">24-08-18</p>
<p style="left:55.5px;top:727px;width:200px;height:27px;line-height:27px;color:#000;font-size:12px;">AC<i>米兰</i></p>
<p style="left:140.5px;top:727px;width:200px;height:27px;line-height:27px;color:#333333;font-size:12px;"><span style="color:#ff0000">2-2</span>(0-1)</p>
<p style="left:207.0px;top:727px;width:200px;height:27px;line-height:27px;color:#333333;font-size:12px;">9-2</p>
<p style="left:266.5px;top:727px;width:200px;height:27px;line-height:27px;color:#008000;font-size:12px;"><i>都灵</i></p>
<p style="left:328.5px;top:727px;width:200px;height:27px;line-height:27px;color:#333333;font-size:12px;">0.87</p>
<p style="left:386.0px;top:727px;width:200px;height:27px;line-height:27px;color:#1f4f9f;font-size:12px;"><i>一球</i></p>
<p style="left:443.5px;top:727px;width:200px;height:27px;line-height:27px;color:#333333;font-size:12px;">1.02</p>
<p style="left:500.0px;top:727px;width:200px;height:27px;line-height:27px;color:#333333;font-size:12px;">1.52</p>
<p style="left:566.5px;top:727px;width:200px;height:27px;line-height:27px;color:#2a5ab0;font-size:12px;">4.26</p>
<p style="left:632.5px;top:727px;width:200px;height:27px;line-height:27px;color:#333333;font-size:12px;">6.27</p>
<p style="left:686.0px;top:727px;width:200px;height:27px;line-height:27px;color:#0000ff;font-size:12px;"><i>平</i></p>
<p style="left:727.0px;top:727px;width:200px;height:27px;line-height:27px;color:#ff0000;font-size:12px;"><i>赢</i></p>
<p style="left:776.0px;top:727px;width:200px;height:27px;line-height:27px;color:#ff0000;font-size:12px;"><i>大</i></p>
</body></html>
